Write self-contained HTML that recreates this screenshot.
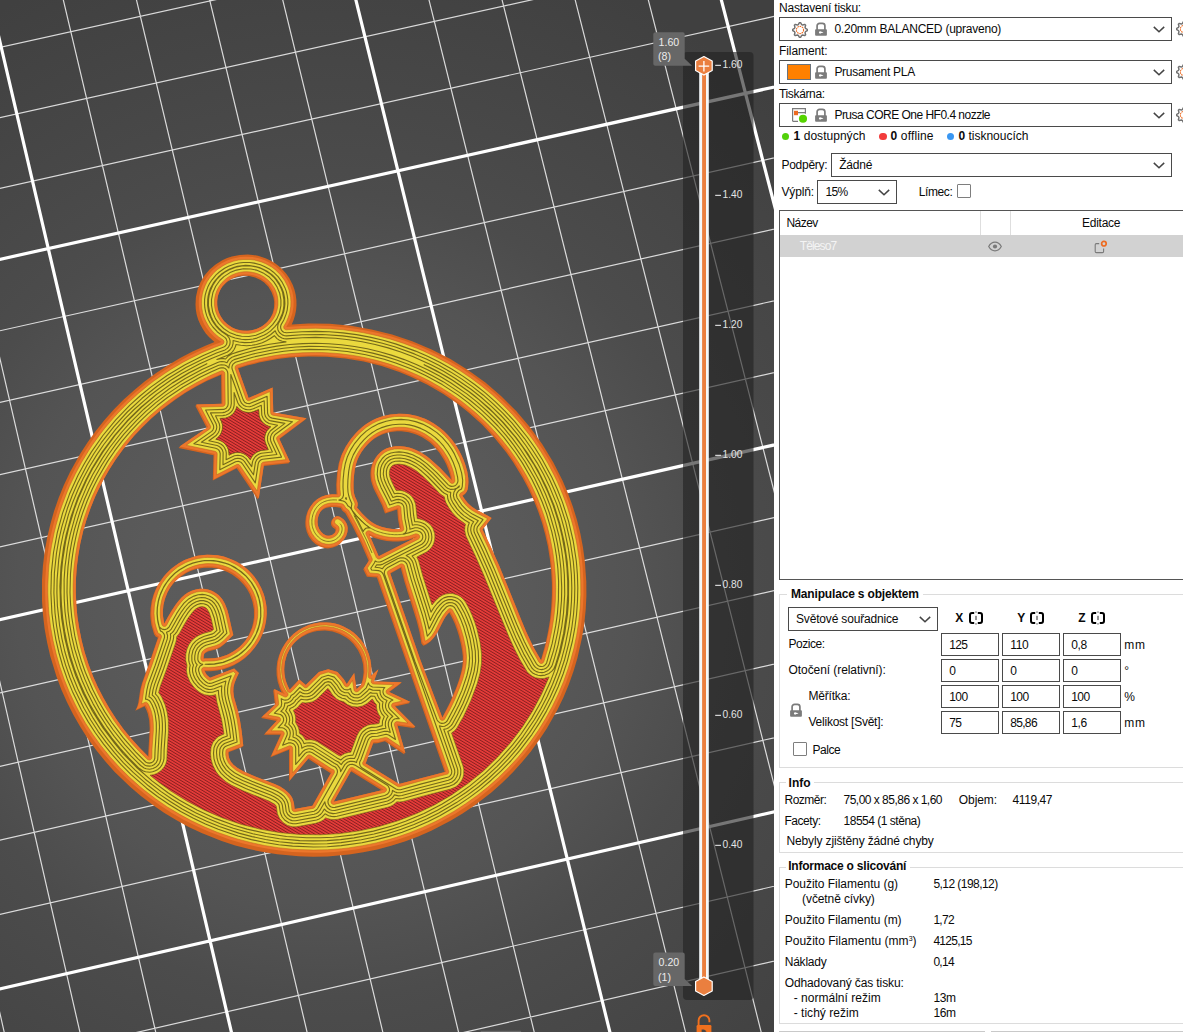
<!DOCTYPE html>
<html lang="cs"><head><meta charset="utf-8"><title>PrusaSlicer</title>
<style>
html,body{margin:0;padding:0;background:#fff;}
body{width:1183px;height:1032px;overflow:hidden;position:relative;font-family:"Liberation Sans",sans-serif;font-size:12px;color:#000;}
#vp{position:absolute;left:0;top:0;display:block}
#pn{position:absolute;left:774px;top:0;width:409px;height:1032px;background:#fff;overflow:hidden}
.t{position:absolute;white-space:nowrap;line-height:16px;font-size:12px;color:#0a0a0a}
.t.b,.t b{font-weight:bold}
.t.sel{color:#f4f4f4}
.sup{font-size:7px;position:relative;top:-4.5px}
.tk{font:10.2px "Liberation Sans",sans-serif;fill:#e4e4e4}
.tp{font:10.6px "Liberation Sans",sans-serif;fill:#ececec}
.combo{position:absolute;box-sizing:border-box;border:1px solid #4a4a4a;background:#fff}
.chev{position:absolute;right:6.5px;top:8.3px}
.ic{position:absolute}
.sw{position:absolute;box-sizing:border-box;width:24px;height:15.7px;background:#ff8000;border:1px solid #6a737c}
.dot{position:absolute;width:7.4px;height:7.4px;border-radius:50%}
.cb{position:absolute;box-sizing:border-box;width:14px;height:14px;border:1px solid #7e7e7e;background:#fff;border-radius:1px}
.list{position:absolute;box-sizing:border-box;border:1px solid #555;background:#fff}
.list .hsep{position:absolute;top:0;width:1px;height:24px;background:#dedede}
.list .row{position:absolute;left:0;right:0;top:24px;height:22px;background:#d2d2d2}
.grp{position:absolute;box-sizing:border-box;border:1px solid #dcdcdc}
.tb{position:absolute;height:8px;background:#fff}
.inp{position:absolute;box-sizing:border-box;width:58px;height:23px;border:1px solid #4a4a4a;background:#fff}
.btn{position:absolute;box-sizing:border-box;height:10px;border:1px solid #c9c9c9;background:#fff}
</style></head><body>
<svg id="vp" width="774" height="1032" viewBox="0 0 774 1032">
<defs>
<radialGradient id="bg" gradientUnits="userSpaceOnUse" cx="325" cy="595" r="670">
<stop offset="0" stop-color="#5e5e5e"/><stop offset=".28" stop-color="#5a5a5a"/><stop offset=".46" stop-color="#545454"/><stop offset=".6" stop-color="#4c4c4c"/><stop offset=".73" stop-color="#484848"/><stop offset="1" stop-color="#404040"/></radialGradient>
</defs>
<rect width="774" height="1032" fill="url(#bg)"/>
<path d="M-253.4 -106.3L59.6 1277.0M-183.9 -121.5L132.1 1260.3M-114.6 -136.7L204.6 1243.5M23.9 -167.0L349.1 1210.1M93.0 -182.2L421.3 1193.4M162.1 -197.3L493.4 1176.7M231.0 -212.4L565.4 1160.1M368.7 -242.6L709.1 1126.8M437.4 -257.7L780.8 1110.3M506.1 -272.7L852.4 1093.7M574.7 -287.7L924.0 1077.1M711.6 -317.7L1066.8 1044.1M779.9 -332.7L1138.1 1027.6M848.1 -347.7L1209.3 1011.1M-253.4 -106.3L916.3 -362.6M-223.3 26.5L951.3 -232.3M-208.2 93.3L968.9 -166.7M-193.0 160.4L986.5 -100.9M-177.8 227.8L1004.3 -34.7M-147.1 363.6L1040.0 98.5M-131.6 431.9L1058.0 165.6M-116.1 500.6L1076.1 233.0M-100.5 569.5L1094.3 300.6M-69.0 708.4L1130.8 436.9M-53.2 778.4L1149.2 505.5M-37.3 848.6L1167.7 574.5M-21.3 919.2L1186.3 643.7M10.8 1061.3L1223.7 783.1M27.0 1132.9L1242.5 853.3M43.3 1204.8L1261.5 923.8M59.6 1277.0L1280.5 994.7" stroke="#fff" stroke-opacity=".8" stroke-width="1.2" fill="none"/><path d="M-45.3 -151.9L276.9 1226.8M299.9 -227.5L637.3 1143.5M643.1 -302.7L995.5 1060.6M-238.4 -40.0L933.8 -297.6M-162.5 295.5L1022.1 31.8M-84.8 638.8L1112.5 368.6M-5.3 990.1L1205.0 713.2" stroke="#fff" stroke-width="3.2" fill="none"/>
<defs><pattern id="hatch" width="2.55" height="2.55" patternUnits="userSpaceOnUse" patternTransform="rotate(31)"><rect width="2.55" height="2.55" fill="#e93c3a"/><rect y="1.6" width="2.55" height="0.95" fill="#872020"/></pattern></defs><g id="obj"><path d="M205.4 345.7L192.6 351.5L180.1 358.1L168.0 365.2L156.2 372.9L144.9 381.3L134.1 390.2L123.7 399.6L113.8 409.6L104.5 420.1L95.7 431.0L87.5 442.4L79.9 454.2L69.8 472.6L63.8 485.2L58.6 498.1L54.0 511.3L50.2 524.7L47.0 538.3L44.6 552.1L42.9 565.9L42.0 579.9L42.0 600.9L43.0 614.9L44.6 628.8L47.1 642.5L50.2 656.1L56.4 676.3L61.3 689.5L67.0 702.3L73.3 714.8L80.4 727.0L88.0 738.9L96.3 750.3L105.2 761.3L114.7 771.9L130.1 786.7L140.9 796.0L152.2 804.6L164.0 812.7L176.1 820.1L188.7 826.9L201.6 833.0L221.6 841.0L235.3 845.4L249.1 849.1L263.2 852.1L277.3 854.3L298.8 856.3L313.1 856.7L327.5 856.4L349.1 854.5L363.3 852.3L377.3 849.4L391.1 845.8L404.8 841.5L418.2 836.4L431.3 830.7L450.5 820.8L462.6 813.5L474.5 805.5L491.4 792.4L502.0 783.0L512.2 773.0L521.7 762.6L530.7 751.7L539.0 740.3L546.8 728.5L557.3 710.0L563.4 697.4L568.8 684.4L573.5 671.3L577.5 657.8L582.1 637.3L584.3 623.6L585.7 609.7L586.4 595.7L586.3 581.8L584.8 560.8L582.9 547.0L580.3 533.3L576.9 519.8L572.8 506.5L568.0 493.4L562.5 480.5L553.1 461.9L542.1 444.1L529.8 427.1L516.2 411.1L501.3 396.3L485.4 382.6L468.3 370.2L450.4 359.1L431.6 349.4L412.2 341.2L392.1 334.5L371.6 329.4L350.7 325.8L329.6 323.8L308.4 323.5L291.7 324.4L293.6 320.0L295.1 315.1L296.1 310.0L296.5 304.9L296.4 299.9L295.7 294.8L294.5 289.8L292.8 285.0L289.2 277.9L286.2 273.7L282.7 269.8L278.9 266.3L274.7 263.1L270.3 260.4L265.5 258.2L258.0 255.8L252.8 254.9L247.7 254.5L239.7 254.9L231.9 256.4L227.1 258.1L222.3 260.3L215.6 264.4L209.6 269.6L204.5 275.6L200.5 282.2L197.6 289.4L195.9 297.0L195.5 304.5L195.8 309.6L196.7 314.7L198.2 319.7L200.3 324.6L202.8 329.1L205.8 333.4L209.2 337.3L214.5 342.0ZM195.8 405.1L196.1 405.8L195.3 405.8L206.8 427.9L179.6 446.6L179.9 446.7L178.6 447.9L213.5 455.2L212.8 480.6L236.7 468.3L257.8 499.5L258.0 498.4L258.3 498.8L258.5 497.7L258.8 498.2L263.7 466.0L289.0 463.2L288.7 462.6L289.5 462.5L289.2 462.0L290.0 461.9L279.4 439.0L305.5 419.6L305.2 419.5L306.5 418.3L273.3 412.5L272.6 387.5L248.6 398.0L238.0 368.5L247.1 365.6L259.1 362.6L277.4 359.1L289.7 357.6L308.3 356.5L326.9 356.8L345.4 358.5L363.7 361.6L381.7 366.1L399.3 372.0L410.8 376.7L427.4 384.7L443.4 394.1L458.6 404.6L468.3 412.2L482.0 424.6L494.6 437.9L506.2 452.2L513.2 462.2L522.8 477.9L528.5 488.7L533.6 499.9L538.1 511.2L542.0 522.8L545.2 534.6L547.9 546.5L549.8 558.6L551.2 570.7L551.9 582.9L551.9 595.1L551.3 607.3L550.1 619.5L548.1 631.6L545.6 643.6L540.9 660.2L533.0 646.2L526.2 631.8L499.1 565.6L490.5 546.2L482.5 529.5L491.6 518.0L487.4 515.5L476.3 509.7L472.2 507.1L467.7 503.1L463.4 497.2L462.6 495.9L465.0 493.9L466.5 491.9L467.5 489.8L468.1 486.7L468.4 482.1L468.2 477.7L467.3 471.7L465.6 465.8L463.6 460.1L461.2 454.7L458.5 449.4L455.3 444.3L451.8 439.5L447.8 435.0L443.5 430.7L438.8 426.9L433.8 423.5L425.0 418.8L417.1 416.0L407.3 414.1L398.8 413.7L388.8 414.8L380.6 416.9L375.1 419.0L371.4 420.9L364.4 425.4L358.0 430.9L351.3 438.5L345.7 446.5L341.2 455.4L338.7 463.5L337.1 473.1L336.2 484.7L336.6 494.4L331.0 494.4L325.6 495.3L320.7 497.1L316.8 499.5L313.2 502.7L309.7 507.5L307.5 511.6L305.9 516.7L305.3 522.2L305.5 526.8L306.8 532.0L308.7 536.3L311.9 540.8L315.4 544.0L319.7 546.6L324.1 548.0L327.9 548.4L332.0 547.8L336.3 546.2L339.8 543.9L343.1 540.5L346.1 535.9L347.4 532.1L347.7 528.1L347.2 525.3L346.4 523.2L345.2 521.2L343.7 519.5L339.8 516.8L337.6 516.3L336.0 516.5L334.5 517.2L333.3 518.3L331.6 520.5L330.9 522.5L331.1 524.7L331.8 526.2L332.9 527.4L335.0 528.9L335.4 529.6L335.3 531.4L334.5 533.1L332.3 534.9L329.2 535.8L326.3 535.5L323.8 534.2L321.3 532.1L319.4 529.4L318.2 526.5L317.5 523.3L317.6 519.2L318.4 515.9L320.1 512.2L322.0 510.1L325.6 508.0L330.3 506.9L335.5 506.9L340.6 507.8L342.4 510.7L343.5 511.8L345.2 512.9L352.2 525.5L361.1 543.4L368.7 560.9L363.2 569.2L366.9 576.7L376.9 577.6L444.8 772.1L420.0 778.4L399.0 784.1L365.4 763.3L365.8 763.0L373.0 743.4L377.4 743.2L384.9 741.3L404.4 754.4L404.0 753.2L404.9 753.8L404.5 752.5L405.4 753.1L397.4 725.7L414.6 728.3L413.7 727.4L415.1 727.6L414.2 726.8L415.6 727.0L395.1 706.5L409.4 703.2L408.6 702.8L409.9 702.5L409.1 702.2L410.4 701.9L389.2 691.9L400.7 683.6L400.3 683.6L401.7 682.3L373.8 681.4L378.4 669.3L370.9 676.1L371.4 671.0L371.1 664.5L370.4 659.9L368.7 653.7L366.9 649.4L363.7 643.7L361.0 640.0L356.6 635.2L353.2 632.3L349.6 629.7L343.5 626.5L339.4 624.8L335.1 623.6L330.7 622.8L326.3 622.4L319.6 622.6L313.1 623.8L308.7 625.1L302.7 627.7L298.7 630.0L293.4 634.1L288.8 638.7L285.0 643.6L281.6 649.2L279.0 655.4L277.2 661.8L276.5 668.5L276.6 675.1L277.7 681.7L279.7 688.1L281.9 692.7L274.2 688.9L274.3 689.9L273.7 689.5L273.8 690.5L273.2 690.2L275.0 704.8L262.1 716.8L261.1 718.1L276.7 720.9L263.9 734.8L280.6 734.8L270.4 757.2L289.0 749.7L289.0 781.4L308.2 758.8L330.2 773.1L330.8 773.0L312.3 805.7L294.6 809.1L294.0 803.5L292.3 798.1L289.4 793.7L284.6 789.4L280.1 786.6L275.2 784.3L255.2 776.4L243.7 771.5L237.6 768.0L233.4 764.7L230.9 761.7L229.7 759.5L228.5 755.7L228.4 752.3L242.3 747.1L242.3 746.7L243.3 745.8L241.6 730.8L239.9 720.1L237.8 710.6L234.2 697.9L233.3 691.5L233.5 687.2L234.5 683.0L236.5 677.9L238.9 673.1L234.2 668.4L210.0 677.7L206.9 675.0L204.7 671.3L210.8 671.3L217.4 670.6L223.6 669.2L229.9 667.1L233.3 665.6L239.1 662.3L244.5 658.4L249.4 653.9L253.6 649.1L256.7 644.8L260.2 639.1L262.9 633.0L264.8 627.0L266.1 620.4L266.7 613.8L266.5 607.1L266.0 603.5L264.7 597.3L263.6 593.7L261.2 587.9L257.9 581.7L254.2 576.5L251.8 573.7L247.3 569.3L244.5 566.9L239.3 563.3L236.1 561.5L227.2 557.7L223.7 556.6L217.5 555.3L213.9 554.9L207.5 554.7L203.9 554.9L197.6 555.8L194.0 556.7L188.0 558.7L184.6 560.1L178.8 563.3L173.5 566.9L170.7 569.2L166.2 573.7L163.8 576.5L160.8 580.5L157.5 585.8L155.8 589.1L153.4 595.0L151.6 601.4L150.6 608.0L150.3 614.7L150.5 618.3L151.4 624.9L154.1 634.2L155.6 636.6L157.9 637.8L148.8 664.6L141.9 683.6L140.2 690.0L138.2 703.2L137.1 707.1L135.3 710.8L144.6 706.2L146.4 709.9L147.8 713.7L149.2 720.3L149.7 728.4L148.1 756.4L139.8 748.0L131.4 738.8L123.6 729.2L116.4 719.2L109.6 708.8L103.5 698.1L97.9 687.2L92.9 675.9L88.6 664.4L84.8 652.7L81.7 640.8L79.3 628.8L77.4 616.7L76.3 604.5L75.8 592.3L75.9 580.0L76.7 567.8L78.2 555.7L80.3 543.6L83.0 531.7L86.4 520.0L90.4 508.4L95.0 497.0L103.0 480.5L109.0 469.9L115.7 459.5L125.6 446.0L133.5 436.6L141.9 427.7L150.8 419.1L160.1 411.1L174.9 399.9L185.1 393.1L195.8 386.8L206.7 381.1L221.1 374.7L221.5 403.8L196.3 404.5L196.6 405.1ZM434.8 636.3L437.5 631.9L444.5 618.5L446.5 615.4L449.2 612.6L451.9 617.4L454.7 623.6L457.1 629.9L459.1 636.4L461.0 644.4L462.2 651.1L462.8 656.5L462.8 662.0L462.2 667.4L461.1 672.7L459.2 679.3L456.5 687.1L450.2 702.1L442.3 717.4L420.4 659.9L390.3 573.5L400.7 567.8L404.7 582.6L416.7 620.9L419.5 632.0L421.4 643.4L423.3 645.7L426.3 644.4L430.4 641.5ZM399.8 529.0L391.8 528.9L386.2 528.1L380.7 526.6L376.1 524.7L372.5 522.7L369.2 520.3L361.2 512.5L357.0 507.4L357.6 505.7L357.7 503.3L357.0 501.0L354.9 496.6L353.9 492.7L353.5 488.4L353.5 482.1L354.6 470.5L355.5 465.9L356.7 461.6L358.5 457.5L361.5 452.1L364.2 448.3L367.3 444.8L370.7 441.6L374.2 438.8L378.0 436.5L382.0 434.6L386.3 433.1L390.7 432.0L396.8 431.3L401.3 431.2L408.8 432.2L413.2 433.4L417.5 435.0L421.7 437.0L425.6 439.4L429.4 442.1L432.9 445.2L439.1 452.2L444.2 460.2L446.3 464.5L448.7 470.5L450.1 475.0L451.0 479.3L439.6 467.5L429.5 458.4L421.4 452.8L413.7 449.0L408.9 447.5L404.1 446.6L399.1 446.2L394.1 446.5L389.2 447.5L385.7 448.8L382.5 450.6L379.6 453.0L377.1 455.8L374.7 459.1L372.9 462.4L371.6 466.0L370.8 469.6L370.5 473.4L370.6 477.1L371.1 480.7L372.1 484.3L373.8 488.9L382.1 505.6L385.0 513.6L397.2 509.4L398.0 519.3ZM378.7 556.3L369.8 535.9L374.7 538.0L380.6 539.8L386.7 541.0L392.8 541.6L398.3 541.5L403.7 540.9L409.0 539.8L415.2 537.8ZM350.9 771.3L381.6 790.3L333.6 801.8ZM284.2 669.5L284.9 661.9L287.0 654.6L290.5 647.8L292.9 644.5L295.5 641.7L301.5 637.0L308.3 633.5L313.7 631.7L317.4 630.9L325.1 630.5L332.6 631.6L339.8 634.0L346.5 637.8L349.5 640.1L353.5 644.1L358.0 650.3L361.3 657.2L363.1 664.6L363.6 672.2L362.6 679.7L360.9 685.2L356.5 689.2L354.2 673.0L346.7 684.1L344.0 679.6L337.5 672.1L328.2 669.3L318.9 672.1L305.8 685.1L299.3 679.6L289.7 689.8L287.8 686.1L285.8 680.8L284.6 675.2ZM267.2 322.1L262.5 325.9L257.2 328.7L251.3 330.4L246.8 330.8L242.2 330.6L236.3 329.2L232.1 327.4L227.1 324.0L223.9 320.9L220.5 316.0L218.7 311.9L217.3 306.2L217.1 301.7L217.9 295.9L220.0 290.3L222.4 286.5L226.4 282.4L231.5 279.1L237.1 276.8L243.1 275.8L249.2 276.0L255.1 277.4L260.6 279.9L264.2 282.5L268.4 286.8L271.5 291.9L273.5 297.4L274.2 301.8L274.0 307.7L272.6 313.4L269.9 318.8ZM164.6 600.1L167.4 592.6L169.9 587.9L172.2 584.7L175.6 580.9L179.6 577.4L186.3 573.0L191.1 570.8L196.2 569.1L204.0 567.8L212.0 567.8L217.3 568.6L222.5 569.9L227.4 571.9L232.1 574.4L238.5 579.2L244.0 585.0L247.1 589.3L249.7 594.0L252.4 601.5L253.9 609.3L254.0 617.3L253.2 622.6L251.9 627.8L248.8 635.1L245.0 641.2L240.1 646.4L233.7 651.3L226.7 655.0L219.0 657.4L213.8 658.2L205.0 658.4L203.5 658.7L203.8 655.1L204.2 653.9L204.8 653.2L207.9 651.6L216.5 649.2L220.5 647.2L225.0 643.5L233.3 634.9L227.8 611.3L225.4 604.9L222.9 600.1L219.5 596.0L216.4 593.4L212.9 591.3L209.1 589.8L205.1 588.9L201.0 588.7L197.0 589.2L191.7 590.8L188.0 592.6L184.7 594.8L181.6 597.5L178.9 600.4L175.4 604.9L171.6 610.5L164.2 623.4L163.0 616.0L162.9 610.6L163.4 605.3Z" fill="#d5641f" fill-rule="evenodd"/><path d="M290.1 285.2L288.0 280.8L284.0 274.8L280.8 271.1L275.3 266.3L271.2 263.5L264.6 260.2L259.9 258.6L252.7 257.1L245.3 256.7L240.3 257.0L233.0 258.5L228.3 260.1L221.7 263.3L217.6 266.0L212.0 270.8L208.8 274.5L205.9 278.4L203.5 282.6L201.6 287.1L200.2 291.7L199.2 296.4L198.8 301.2L198.9 306.0L199.5 310.8L200.6 315.5L202.2 320.0L204.3 324.4L206.9 328.5L209.9 332.4L213.3 335.9L217.0 339.0L221.4 341.9L213.3 345.0L200.5 350.5L187.9 356.6L181.8 359.9L169.8 366.9L163.9 370.7L152.5 378.7L147.0 382.9L136.2 391.7L131.1 396.3L121.0 405.9L116.2 410.9L107.0 421.2L102.6 426.6L94.2 437.6L90.3 443.3L82.8 454.9L75.9 466.9L69.7 479.3L66.9 485.5L61.7 498.3L59.3 504.8L55.2 518.0L53.4 524.6L50.2 538.1L49.0 544.9L47.0 558.5L46.2 565.4L45.3 579.1L45.1 586.0L45.3 599.9L45.7 606.8L47.0 620.5L49.0 634.2L51.8 647.8L55.3 661.2L59.5 674.4L64.4 687.3L70.0 700.1L73.1 706.3L79.7 718.6L86.9 730.5L94.8 742.0L103.3 753.1L112.4 763.7L122.1 773.9L132.3 783.5L137.6 788.1L148.5 797.0L160.0 805.2L171.8 812.9L184.0 819.9L196.7 826.3L209.6 832.1L222.8 837.1L229.5 839.4L243.1 843.4L256.9 846.7L270.9 849.3L285.0 851.2L292.1 851.9L306.3 852.6L320.5 852.7L334.7 852.0L341.8 851.3L355.9 849.6L369.8 847.0L383.7 843.8L397.3 839.8L410.7 835.2L423.8 829.9L436.6 823.9L442.9 820.6L455.2 813.7L467.1 806.1L478.6 797.9L489.6 789.1L500.1 779.8L510.1 770.0L519.5 759.6L524.1 754.3L532.6 743.3L540.6 731.8L548.0 720.0L554.7 707.8L560.7 695.2L566.1 682.4L570.7 669.4L572.8 662.8L576.4 649.4L579.3 635.9L581.4 622.2L582.8 608.5L583.5 594.7L583.4 580.9L582.6 567.1L582.0 560.3L580.1 546.6L578.9 539.9L575.9 526.4L574.1 519.8L570.1 506.6L565.3 493.6L559.9 481.0L557.0 474.7L550.5 462.5L543.5 450.7L535.8 439.2L531.8 433.6L523.2 422.7L514.1 412.3L504.4 402.4L494.3 393.0L483.6 384.1L472.5 375.8L461.0 368.0L449.0 360.9L436.7 354.4L424.1 348.5L417.7 345.8L404.7 340.8L391.4 336.6L377.9 333.0L364.2 330.2L357.3 329.0L343.5 327.2L329.6 326.0L315.6 325.6L301.6 325.9L286.3 327.1L288.9 322.6L290.8 318.1L292.3 313.5L293.5 306.4L293.6 301.6L293.3 296.8L292.4 292.0ZM196.3 404.5L208.0 427.0L179.6 446.6L214.5 453.9L213.8 479.3L237.7 467.0L258.8 498.2L263.9 464.8L290.0 461.9L279.2 438.6L306.5 418.3L273.3 412.5L272.6 387.5L248.6 398.0L237.7 367.6L248.1 364.3L260.1 361.3L266.2 360.0L278.4 357.8L290.7 356.3L296.9 355.8L309.3 355.2L315.5 355.1L327.9 355.5L340.2 356.5L346.4 357.2L358.6 359.1L364.7 360.3L376.7 363.2L382.7 364.8L394.5 368.6L400.3 370.7L411.8 375.4L422.9 380.6L428.4 383.4L439.2 389.5L444.4 392.8L454.6 399.6L459.6 403.3L469.3 410.9L478.5 419.0L483.0 423.3L491.5 432.1L495.6 436.6L503.5 446.1L507.2 450.9L514.2 460.9L520.8 471.3L523.8 476.6L529.5 487.4L534.6 498.6L539.1 509.9L543.0 521.5L546.2 533.3L548.9 545.2L550.8 557.3L552.2 569.4L552.6 575.5L553.0 587.7L552.7 599.9L551.8 612.1L550.2 624.3L547.9 636.3L545.1 648.2L541.3 660.8L534.2 648.5L530.7 641.4L526.2 631.8L521.0 619.6L507.2 585.2L499.1 565.6L490.5 546.2L482.5 529.5L491.6 518.0L487.4 515.5L476.3 509.7L472.2 507.1L469.4 504.8L467.7 503.1L465.4 500.3L463.4 497.2L462.2 495.2L463.6 494.6L464.9 493.7L466.0 492.6L466.9 491.2L467.5 489.8L468.0 487.2L468.4 482.1L468.2 477.7L467.3 471.7L465.6 465.8L463.6 460.1L461.2 454.7L458.5 449.4L455.3 444.3L451.8 439.5L447.8 435.0L443.5 430.7L438.8 426.9L433.8 423.5L428.7 420.6L425.0 418.8L417.1 416.0L411.3 414.7L407.3 414.1L399.0 413.7L390.6 414.5L384.8 415.7L380.9 416.8L376.7 418.3L373.0 420.1L369.3 422.1L365.8 424.3L362.5 426.8L358.1 430.7L355.2 433.8L351.4 438.3L348.9 441.7L345.8 446.7L342.2 454.1L340.9 458.0L339.7 462.2L338.0 471.9L337.5 477.6L337.2 485.2L337.3 489.4L337.8 494.5L332.1 494.3L326.7 495.1L321.7 496.7L317.5 498.9L314.0 501.9L310.7 506.2L308.5 510.3L306.9 515.4L306.3 520.9L306.5 525.5L307.8 530.7L309.7 535.0L312.9 539.5L316.4 542.7L320.7 545.3L325.1 546.7L328.9 547.1L333.0 546.5L337.3 544.9L340.8 542.6L344.1 539.2L346.1 535.9L347.4 532.1L347.7 528.1L347.2 525.3L346.4 523.2L345.2 521.2L343.7 519.5L341.7 517.9L339.8 516.8L337.6 516.3L336.0 516.5L334.5 517.2L333.3 518.3L332.2 520.2L331.9 521.8L332.1 523.4L332.8 524.9L333.9 526.1L336.0 527.6L336.4 528.3L336.3 530.1L335.2 532.4L334.1 533.6L332.8 534.6L331.2 535.3L329.2 535.8L327.7 535.8L326.3 535.5L323.3 533.9L320.9 531.6L319.1 528.8L318.0 525.8L317.5 521.9L317.9 517.9L318.9 514.6L320.5 511.6L323.0 508.8L324.4 507.8L326.6 506.7L331.3 505.6L336.5 505.6L341.6 506.5L343.4 509.4L344.5 510.5L346.2 511.6L353.2 524.2L362.1 542.1L369.7 559.6L364.2 567.9L367.9 575.4L377.9 576.3L446.1 771.8L420.0 778.4L399.0 784.1L365.3 763.3L365.8 763.0L373.5 742.1L378.4 741.9L385.9 740.0L405.4 753.1L397.0 724.2L415.6 727.0L394.2 705.6L410.4 701.9L388.7 691.7L401.7 682.3L373.8 681.4L378.4 669.3L370.9 676.1L371.4 671.0L371.1 664.5L370.4 659.9L368.7 653.7L366.9 649.4L363.7 643.7L361.0 640.0L356.6 635.2L353.2 632.3L349.6 629.7L343.5 626.5L339.4 624.8L335.1 623.6L330.7 622.8L326.3 622.4L319.6 622.6L313.1 623.8L308.7 625.1L302.7 627.7L298.7 630.0L293.4 634.1L288.8 638.7L286.0 642.3L282.5 648.1L280.7 652.1L279.3 656.2L277.9 662.7L277.4 669.4L277.9 676.2L278.7 680.4L280.0 684.7L281.6 688.9L283.7 692.8L284.5 693.8L285.4 694.4L274.2 688.9L276.0 703.8L262.1 716.8L277.9 719.6L264.9 733.5L281.6 733.5L271.4 755.9L290.0 748.4L290.0 780.1L309.2 757.5L331.2 771.8L331.8 771.7L312.6 805.7L294.6 809.1L294.0 803.5L293.3 800.7L292.3 798.1L291.0 795.8L289.4 793.7L287.6 791.9L284.6 789.4L280.1 786.6L275.2 784.3L255.2 776.4L243.7 771.5L237.6 768.0L233.4 764.7L230.9 761.7L229.2 758.3L228.4 754.3L228.4 751.4L243.3 745.8L241.6 730.8L239.9 720.1L237.8 710.6L234.2 697.9L233.6 694.7L233.3 691.5L233.5 687.2L234.5 683.0L236.5 677.9L238.9 673.1L234.2 668.4L210.0 677.7L208.0 676.1L206.4 674.4L205.0 672.0L204.3 669.9L208.5 670.1L215.1 669.8L221.7 668.7L228.1 666.8L234.0 664.4L239.8 661.2L245.3 657.3L250.2 652.8L254.6 647.8L258.4 642.3L260.2 639.1L262.9 633.0L264.8 627.0L266.1 620.4L266.7 613.8L266.5 607.1L266.0 603.5L264.7 597.3L263.6 593.7L261.2 587.9L257.9 581.7L254.2 576.5L251.8 573.7L247.3 569.3L244.5 566.9L239.3 563.3L236.1 561.5L233.1 560.0L227.2 557.7L223.7 556.6L217.5 555.3L213.9 554.9L207.5 554.7L203.9 554.9L197.6 555.8L194.0 556.7L188.0 558.7L184.6 560.1L178.8 563.3L173.5 566.9L170.7 569.2L166.2 573.7L163.8 576.5L160.2 581.7L158.3 584.8L155.6 590.5L154.3 594.0L152.6 600.1L151.6 606.7L151.3 613.4L151.8 620.0L153.1 626.9L155.3 633.4L156.6 635.3L158.9 636.5L156.1 644.3L149.8 663.3L142.9 682.3L141.2 688.7L139.2 701.9L138.1 705.8L136.3 709.5L145.6 704.9L147.4 708.6L149.2 713.7L150.4 720.3L150.7 727.1L150.5 734.0L149.3 750.5L149.2 757.4L139.8 748.0L131.4 738.8L123.6 729.2L116.4 719.2L109.6 708.8L103.5 698.1L97.9 687.2L92.9 675.9L88.6 664.4L84.8 652.7L81.7 640.8L79.3 628.8L77.4 616.7L76.3 604.5L75.8 592.3L75.9 580.0L76.7 567.8L78.2 555.7L80.3 543.6L83.0 531.7L86.4 520.0L90.4 508.4L95.0 497.0L97.5 491.5L103.0 480.5L109.0 469.9L115.7 459.5L122.8 449.6L126.6 444.7L134.5 435.3L142.9 426.4L151.8 417.8L161.1 409.8L165.9 405.9L175.9 398.6L186.1 391.8L196.8 385.5L207.7 379.8L222.1 373.4L222.5 403.8ZM405.7 581.3L414.5 608.6L417.7 619.6L420.5 630.7L422.4 642.1L424.3 644.4L427.3 643.1L429.9 641.5L432.1 639.5L434.1 637.2L437.5 631.9L442.9 621.3L445.0 617.6L447.4 614.2L450.2 611.3L452.9 616.1L455.7 622.3L458.1 628.6L460.1 635.1L462.6 645.8L463.8 655.2L463.7 662.0L462.4 670.1L459.4 680.6L454.5 693.4L448.9 705.7L442.4 717.7L420.4 659.9L390.1 572.9L401.7 566.5ZM398.0 529.1L393.0 529.0L387.4 528.3L381.9 527.0L377.2 525.2L373.5 523.3L370.1 521.0L366.8 518.2L362.1 513.4L357.0 507.4L357.6 505.7L357.7 503.3L357.0 501.0L354.9 496.6L353.9 492.7L353.5 488.4L353.5 482.1L354.0 475.3L354.8 468.9L355.9 464.4L357.3 460.2L359.1 456.1L361.5 452.1L364.2 448.3L368.3 443.5L371.7 440.3L375.2 437.5L379.0 435.2L383.0 433.3L387.3 431.8L391.7 430.7L397.8 430.0L402.3 429.9L406.8 430.3L411.3 431.2L415.7 432.5L419.9 434.3L424.0 436.4L427.9 439.0L431.6 441.8L435.0 445.0L438.2 448.5L441.0 452.2L443.6 456.2L446.6 461.7L448.5 466.1L450.7 472.2L451.7 476.6L452.2 480.7L440.5 468.3L430.5 459.2L426.6 456.1L422.5 453.4L418.2 451.0L414.8 449.5L410.1 447.8L405.3 446.7L400.3 446.2L395.3 446.3L390.4 447.2L386.8 448.3L383.5 450.0L380.5 452.2L377.9 454.8L375.7 457.8L373.9 461.1L372.6 464.7L371.8 468.3L371.5 472.1L371.6 475.8L372.4 480.6L373.4 484.1L374.8 487.6L383.1 504.3L384.9 508.8L386.0 512.3L398.2 508.1L398.5 513.5L399.1 518.8L401.1 528.8ZM368.5 533.4L375.7 536.7L381.6 538.5L387.6 539.7L393.1 540.2L398.5 540.3L403.9 539.8L410.0 538.5L415.9 536.4L417.1 536.8L378.7 556.3L370.9 538.2ZM383.8 789.8L333.6 801.8L351.6 770.0ZM284.4 673.3L284.2 669.5L284.4 665.7L284.9 661.9L285.8 658.2L287.0 654.6L288.6 651.1L290.5 647.8L293.9 643.2L296.5 640.4L299.4 637.9L302.5 635.7L305.8 633.8L309.3 632.2L312.9 630.9L316.6 630.0L320.3 629.4L324.1 629.2L328.0 629.4L331.7 629.9L335.5 630.7L340.8 632.7L344.2 634.4L347.5 636.5L350.5 638.8L353.3 641.4L355.8 644.3L358.0 647.4L360.0 650.6L361.6 654.1L362.9 657.7L363.8 661.4L364.4 665.2L364.6 669.0L364.5 672.8L363.6 678.4L362.5 682.1L361.6 684.5L356.5 689.2L354.2 673.0L346.8 684.2L344.0 679.6L337.5 672.1L328.2 669.3L318.9 672.1L305.8 685.1L299.3 679.6L289.7 689.8L287.8 686.1L286.4 682.6L285.3 678.9ZM275.2 300.5L275.3 303.5L275.0 306.4L274.5 309.3L273.6 312.1L272.4 314.9L270.9 317.5L268.2 321.0L266.1 323.2L263.8 325.1L261.3 326.7L258.6 328.1L255.8 329.3L252.8 330.1L248.3 330.8L243.7 330.8L240.7 330.4L237.7 329.7L234.9 328.7L232.1 327.4L229.5 325.8L227.1 324.0L223.9 320.9L222.1 318.5L220.5 316.0L219.2 313.3L218.2 310.5L217.5 307.6L217.2 304.7L217.2 300.3L217.6 297.3L218.3 294.5L219.4 291.7L220.7 289.0L222.3 286.5L224.2 284.2L227.4 281.1L229.9 279.3L232.5 277.8L235.2 276.5L238.1 275.5L241.1 274.8L244.1 274.5L247.1 274.4L250.2 274.7L253.2 275.2L256.1 276.1L258.9 277.2L261.6 278.6L265.2 281.2L267.4 283.3L269.4 285.5L271.1 288.0L272.5 290.6L273.7 293.3L274.5 296.1ZM163.4 605.3L164.6 600.1L165.4 597.6L167.4 592.6L169.9 587.9L173.0 583.6L176.6 579.6L180.6 576.1L182.7 574.5L184.9 573.1L189.6 570.6L194.6 568.6L199.8 567.2L205.0 566.5L207.7 566.3L213.0 566.5L215.7 566.8L220.9 567.9L223.5 568.6L228.4 570.6L233.1 573.1L235.3 574.6L239.5 577.9L243.3 581.6L246.6 585.8L248.1 588.0L250.7 592.7L252.7 597.6L253.4 600.2L254.6 605.4L254.9 608.0L255.1 613.4L254.7 618.7L253.6 623.9L252.9 626.5L251.0 631.4L248.5 636.2L245.5 640.6L243.8 642.6L242.0 644.6L238.1 648.2L233.7 651.3L229.1 653.9L226.7 655.0L221.6 656.7L219.0 657.4L213.8 658.2L208.4 658.5L205.0 658.4L203.5 658.7L203.6 656.6L204.0 654.5L204.5 653.3L205.8 651.9L208.2 650.6L216.7 648.2L220.9 646.2L225.0 643.2L233.3 634.9L231.7 628.8L228.8 615.4L227.3 610.0L224.8 603.6L222.1 599.1L218.6 595.1L215.3 592.7L211.7 590.7L207.8 589.4L203.8 588.7L199.7 588.8L195.6 589.5L191.7 590.8L188.0 592.6L184.7 594.8L181.6 597.5L178.9 600.4L175.6 604.7L171.9 610.4L167.8 617.3L164.3 623.8L163.8 621.2L163.0 616.0L162.9 610.6Z" fill="#ec772c" fill-rule="evenodd"/><path d="M287.6 286.2L284.5 280.2L280.4 274.7L275.5 269.9L271.8 267.1L265.7 263.7L261.4 261.9L254.6 260.1L250.0 259.5L243.0 259.5L238.3 260.1L233.8 261.1L227.2 263.5L223.1 265.7L217.4 269.6L213.9 272.7L209.5 278.0L207.0 281.8L205.0 285.9L203.4 290.2L202.3 294.6L201.6 299.0L201.5 303.6L201.8 308.1L202.6 312.5L203.9 316.9L205.7 321.1L209.1 327.0L211.9 330.6L215.1 333.9L218.7 336.9L223.3 340.1L224.0 341.5L223.8 343.1L223.2 343.9L222.5 344.4L214.3 347.5L201.6 352.9L189.2 359.0L183.1 362.2L171.2 369.2L165.4 373.0L154.1 380.8L148.6 385.0L138.0 393.7L127.9 403.0L118.2 412.7L113.6 417.8L104.7 428.3L100.5 433.7L92.5 444.8L88.7 450.5L81.6 462.2L75.2 474.3L69.3 486.6L66.7 492.9L61.9 505.7L59.7 512.2L56.0 525.3L54.3 532.0L51.6 545.3L50.5 552.1L48.9 565.6L48.4 572.4L47.8 586.1L47.8 592.9L48.4 606.6L48.9 613.4L50.6 627.0L53.0 640.4L56.1 653.8L59.9 667.0L64.4 679.9L69.6 692.7L75.5 705.1L78.7 711.2L85.5 723.2L93.0 734.7L101.2 745.9L109.9 756.7L119.2 767.0L129.0 776.8L139.3 786.1L144.7 790.5L155.8 799.0L167.3 806.9L179.2 814.1L191.5 820.8L204.2 826.8L217.1 832.2L230.4 836.8L237.1 838.9L250.7 842.5L264.4 845.5L278.3 847.7L292.3 849.2L299.3 849.6L313.4 850.0L327.5 849.7L341.5 848.7L348.5 847.9L362.4 845.7L376.2 842.9L389.8 839.3L396.5 837.3L409.7 832.7L422.7 827.4L435.4 821.5L441.6 818.3L453.8 811.4L465.6 803.8L476.9 795.7L487.8 787.1L498.3 777.8L508.1 768.1L517.5 757.9L522.0 752.6L530.5 741.6L538.4 730.3L545.6 718.6L552.3 706.5L558.3 694.1L563.6 681.5L568.2 668.5L570.2 662.0L573.8 648.8L576.6 635.4L578.7 621.9L580.1 608.3L580.8 594.6L580.7 581.0L580.0 567.4L579.3 560.6L577.4 547.1L576.2 540.4L573.3 527.1L571.5 520.5L567.5 507.4L562.8 494.6L557.5 482.1L554.5 475.9L548.2 463.8L541.2 452.1L533.6 440.7L529.6 435.2L521.1 424.4L512.1 414.2L502.5 404.3L492.5 395.0L481.9 386.2L470.9 378.0L459.5 370.3L447.7 363.2L435.5 356.8L423.1 350.9L416.7 348.3L403.8 343.4L390.6 339.2L377.3 335.7L363.7 332.8L356.9 331.7L343.2 329.8L329.4 328.7L315.6 328.3L301.8 328.6L286.4 329.8L285.1 329.5L284.4 329.0L283.8 328.1L283.7 326.6L286.5 321.4L288.3 317.2L289.7 312.9L290.8 306.2L290.9 301.6L290.6 297.1L289.2 290.5ZM141.5 703.9L145.4 702.2L146.7 702.4L147.7 703.2L149.4 706.3L151.0 710.3L152.1 714.4L152.9 718.6L153.3 724.2L153.4 729.9L152.0 749.3L151.9 757.6L151.7 758.3L151.2 759.2L150.3 759.8L149.6 760.1L148.0 759.8L146.7 758.8L142.2 754.4L133.5 745.3L129.4 740.6L121.5 730.9L114.1 720.7L107.3 710.2L104.1 704.9L98.2 693.9L92.8 682.6L90.4 676.9L86.0 665.3L82.2 653.5L79.1 641.4L76.6 629.2L75.6 623.1L74.1 610.9L73.2 598.5L73.1 586.1L73.5 573.7L74.0 567.5L75.5 555.3L77.6 543.1L80.4 531.1L83.8 519.2L87.8 507.5L92.5 496.0L97.7 484.8L103.6 473.8L110.0 463.2L117.0 452.9L124.5 443.0L132.5 433.5L141.0 424.4L150.0 415.8L159.4 407.7L169.3 400.0L174.3 396.4L184.7 389.5L195.5 383.2L206.5 377.4L212.2 374.7L221.5 370.7L223.1 370.9L224.3 371.9L224.8 373.4L225.2 403.8L224.9 405.0L224.0 406.0L222.8 406.5L200.7 407.1L210.4 425.8L210.7 426.7L210.5 428.0L209.5 429.2L186.3 445.2L215.1 451.3L216.4 452.0L217.0 452.9L217.2 454.0L216.6 474.8L236.7 464.5L238.0 464.3L239.2 464.8L239.9 465.5L257.2 491.0L261.2 464.4L261.9 462.9L262.6 462.4L263.6 462.1L286.0 459.6L276.7 439.5L276.5 438.2L276.9 437.2L277.6 436.4L299.9 419.9L272.8 415.2L271.4 414.5L270.8 413.6L270.6 412.6L270.0 391.6L249.4 400.6L248.2 400.7L247.0 400.2L246.1 398.9L235.1 368.5L235.1 366.9L235.7 365.7L236.8 365.0L247.4 361.7L259.5 358.6L271.9 356.1L278.0 355.1L290.4 353.6L303.0 352.7L315.5 352.4L321.8 352.5L334.2 353.2L340.5 353.8L352.9 355.4L359.1 356.5L365.3 357.7L377.4 360.6L389.5 364.1L401.2 368.2L407.1 370.5L418.5 375.5L424.1 378.2L429.7 381.1L440.5 387.2L451.1 393.9L461.2 401.1L466.2 404.9L475.7 412.8L480.3 417.0L489.3 425.7L497.6 434.8L501.7 439.5L509.4 449.3L516.5 459.4L519.8 464.6L526.2 475.3L531.9 486.3L537.1 497.5L539.4 503.2L543.6 514.8L547.3 526.6L550.2 538.6L552.6 550.7L554.3 563.0L555.3 575.4L555.7 587.7L555.4 600.0L555.0 606.2L553.7 618.5L551.8 630.8L549.2 642.9L547.7 648.9L543.8 661.7L543.1 662.8L542.0 663.4L540.9 663.5L540.2 663.3L539.0 662.2L531.9 649.8L525.9 637.8L518.5 620.7L504.7 586.2L496.6 566.7L488.1 547.4L480.0 530.4L479.8 529.1L480.2 528.1L487.6 518.7L475.0 512.1L471.6 510.0L468.6 507.7L466.5 505.8L464.0 502.9L461.7 499.7L459.6 496.1L459.5 494.8L460.0 493.6L460.8 492.9L463.2 491.6L463.9 490.9L464.7 489.5L465.4 486.3L465.7 482.1L465.4 476.3L464.2 470.4L462.4 464.6L459.6 457.6L457.0 452.4L454.2 447.6L450.9 442.9L448.4 439.7L444.5 435.4L440.4 431.6L437.2 429.1L432.6 425.9L429.0 423.8L423.9 421.3L416.4 418.6L410.8 417.3L406.9 416.7L399.1 416.4L394.9 416.6L389.3 417.4L381.5 419.4L376.2 421.5L372.6 423.3L366.0 427.5L359.9 432.8L356.0 436.9L353.4 440.1L350.2 444.7L348.1 448.0L344.7 455.3L342.3 462.8L340.7 472.2L339.9 483.4L340.0 489.3L340.5 494.3L340.2 495.8L339.3 496.7L338.3 497.1L332.2 497.0L326.5 497.9L322.6 499.2L319.2 501.0L316.0 503.8L313.0 507.6L311.0 511.3L309.6 516.0L309.0 521.0L309.2 525.1L310.3 529.8L312.1 533.7L315.0 537.7L318.2 540.7L321.8 542.9L325.9 544.1L329.1 544.3L333.1 543.7L336.3 542.3L339.7 540.0L342.1 537.3L343.8 534.4L344.8 531.2L345.0 527.8L344.6 526.0L344.0 524.4L342.2 521.8L340.9 520.6L338.7 519.2L337.6 519.0L336.7 519.1L335.7 519.6L335.0 520.5L334.6 521.6L334.7 522.7L335.4 523.9L337.3 525.2L338.4 526.3L339.0 527.6L339.2 529.2L339.0 530.8L338.4 532.2L336.4 535.2L334.7 536.5L332.8 537.6L330.7 538.3L328.2 538.6L326.2 538.3L324.2 537.6L322.3 536.5L320.4 535.0L317.9 532.0L316.1 528.6L314.9 524.3L314.8 520.4L315.6 515.8L317.1 512.0L319.6 508.3L322.3 505.9L324.2 504.8L326.4 503.9L328.7 503.3L331.7 502.9L337.5 503.0L340.7 503.5L342.9 504.1L343.9 505.0L345.8 508.1L348.5 510.0L355.6 522.9L364.6 541.1L372.3 559.0L372.3 559.8L372.1 560.8L367.3 568.1L369.7 572.9L378.4 573.7L379.8 574.4L380.5 575.4L448.6 770.9L448.8 771.7L448.6 772.7L448.3 773.4L447.5 774.1L420.7 781.0L399.7 786.7L398.6 786.8L397.6 786.4L363.3 765.1L362.6 763.7L362.7 762.4L363.6 761.1L371.0 741.2L371.5 740.3L372.4 739.6L373.4 739.4L378.0 739.2L385.2 737.4L386.5 737.4L387.4 737.8L400.7 746.7L394.4 725.0L394.4 723.4L395.4 722.1L396.9 721.5L407.9 723.1L392.3 707.5L391.7 706.6L391.5 705.6L391.9 704.1L393.1 703.1L402.2 701.0L387.6 694.1L386.9 693.7L386.3 692.8L386.0 691.3L386.7 689.9L393.7 684.7L373.7 684.1L372.4 683.7L371.6 683.0L371.3 682.3L371.1 681.2L372.0 678.6L370.8 678.8L369.7 678.5L368.7 677.7L368.3 676.7L368.7 671.0L368.5 664.8L367.8 660.5L366.1 654.5L364.5 650.6L361.5 645.1L359.0 641.7L356.2 638.5L353.1 635.6L349.8 633.1L346.2 630.8L342.5 628.9L338.5 627.4L334.5 626.3L330.4 625.5L326.2 625.1L319.9 625.3L313.8 626.4L309.6 627.6L304.0 630.1L300.2 632.3L295.2 636.1L290.8 640.5L287.1 645.5L284.1 651.1L281.9 657.0L280.5 663.1L280.1 669.5L280.6 675.8L281.9 682.0L283.3 685.9L285.1 689.7L286.1 691.6L287.2 692.4L287.9 693.2L288.1 694.0L288.0 695.1L287.6 696.0L287.0 696.6L286.0 697.0L285.0 697.1L277.5 693.5L278.7 703.5L278.4 705.0L277.8 705.8L267.9 715.1L278.6 717.0L279.6 717.5L280.4 718.5L280.6 720.0L280.0 721.2L271.1 730.8L281.9 730.8L283.3 731.4L284.2 732.8L284.3 733.6L284.1 734.6L276.7 750.9L289.5 745.7L291.0 745.9L291.7 746.3L292.4 747.1L292.7 748.4L292.7 772.8L307.1 755.8L307.9 755.1L308.9 754.8L310.7 755.2L331.9 769.1L333.4 769.5L334.2 770.5L334.5 771.8L334.2 773.1L314.8 807.3L314.0 808.0L313.0 808.4L295.1 811.7L293.6 811.5L292.7 810.9L292.0 809.8L291.1 802.7L290.3 800.4L289.3 798.3L286.6 794.6L283.1 791.6L278.9 789.0L274.2 786.7L254.2 778.9L242.6 773.9L236.1 770.3L231.6 766.6L228.6 763.1L226.6 759.1L225.7 754.7L225.9 750.5L226.4 749.6L227.2 749.0L240.4 744.0L238.8 730.1L237.1 719.6L235.2 711.3L231.6 698.5L230.6 692.7L230.7 688.1L231.5 683.4L233.1 678.9L235.6 673.6L233.5 671.5L211.0 680.2L209.7 680.4L208.7 680.1L206.9 678.8L204.2 676.0L202.2 672.4L201.7 670.5L201.6 669.4L202.3 668.0L203.7 667.2L208.5 667.4L214.8 667.1L221.1 666.1L227.2 664.3L232.8 662.0L238.4 658.9L243.6 655.2L246.2 652.9L250.6 648.4L254.5 643.3L257.6 638.1L260.3 632.3L261.4 629.1L263.0 622.9L263.8 616.6L264.0 610.2L263.4 604.2L262.8 601.0L262.0 597.7L260.0 591.9L258.7 588.8L255.7 583.4L251.9 578.0L249.9 575.6L245.5 571.3L242.9 569.1L237.9 565.6L234.9 563.9L229.4 561.3L226.1 560.1L220.2 558.6L213.7 557.6L207.6 557.4L204.1 557.6L198.1 558.5L194.8 559.3L189.0 561.2L185.8 562.5L180.4 565.4L177.7 567.1L175.0 569.2L170.4 573.2L166.0 578.1L162.4 583.1L160.7 586.1L158.0 591.8L156.0 597.9L154.7 603.8L154.3 607.0L154.0 613.3L154.5 619.9L155.0 623.1L156.6 629.0L157.9 632.6L158.7 633.5L160.1 634.2L160.9 634.8L161.5 636.0L161.5 637.0L152.3 664.2L145.4 683.0L143.9 689.2L142.4 699.7ZM408.2 580.5L417.0 607.8L420.3 618.9L423.1 630.2L425.1 641.2L426.8 640.3L428.9 638.8L432.0 635.5L435.2 630.6L440.5 620.0L443.4 615.2L446.8 610.8L448.6 609.1L449.8 608.6L451.1 608.8L452.4 609.7L456.5 617.4L460.2 626.4L463.4 637.1L465.7 648.0L466.5 656.5L466.2 663.7L464.7 672.1L462.8 678.8L460.5 685.4L454.8 699.5L450.7 708.1L446.1 716.6L444.4 719.5L443.1 720.3L442.1 720.4L441.3 720.2L440.4 719.6L439.9 718.7L417.9 660.8L387.5 573.8L387.4 572.7L387.5 571.9L387.9 571.2L388.8 570.5L400.4 564.1L401.4 563.8L402.7 564.0L403.7 564.7L404.3 565.6ZM387.8 508.8L397.8 505.4L399.4 505.7L400.4 506.5L400.9 507.7L401.2 513.3L401.9 519.3L403.8 528.7L403.6 530.0L402.7 531.0L401.5 531.5L397.4 531.8L393.5 531.8L389.6 531.4L382.4 529.9L375.5 527.4L370.5 524.7L366.4 521.5L359.7 514.8L354.8 509.0L354.3 507.3L355.0 504.7L354.9 503.1L352.9 498.7L351.6 494.7L350.9 490.2L350.7 485.4L351.1 476.8L351.9 470.1L353.2 463.7L354.7 459.2L356.7 454.9L359.2 450.7L362.0 446.7L365.3 442.8L368.7 439.3L372.4 436.2L376.4 433.6L380.5 431.4L384.9 429.7L389.6 428.4L394.5 427.5L399.3 427.2L404.1 427.3L408.7 427.9L413.4 429.0L418.0 430.6L421.1 431.9L425.3 434.1L432.0 438.7L438.0 444.3L443.2 450.6L447.6 457.6L449.7 462.0L451.7 466.7L453.3 471.5L454.4 476.1L454.9 480.5L454.7 481.7L454.0 482.8L452.8 483.4L451.8 483.4L450.6 482.9L439.4 471.1L430.6 462.8L423.1 457.0L419.1 454.5L415.9 452.9L411.6 451.1L408.3 450.1L404.9 449.4L401.4 449.0L397.9 448.9L394.4 449.1L391.0 449.8L387.8 450.8L384.9 452.3L382.3 454.2L380.0 456.5L378.0 459.3L376.4 462.2L375.2 465.4L374.5 468.7L374.2 473.3L374.8 478.9L376.4 484.4L378.7 489.8L385.5 503.1ZM369.4 530.8L375.9 533.9L380.8 535.5L385.9 536.7L390.3 537.3L396.9 537.6L403.5 537.1L409.3 535.9L415.9 533.7L417.9 534.2L418.8 534.7L419.6 535.8L419.8 537.1L419.3 538.3L418.3 539.2L380.2 558.7L379.4 559.0L378.3 559.0L377.3 558.6L376.3 557.6L368.4 539.3L365.9 534.1L365.8 533.4L366.1 532.3L366.7 531.5L367.6 530.9L368.6 530.7ZM349.3 768.7L349.9 768.0L350.9 767.4L352.1 767.3L353.3 767.7L385.4 787.6L386.1 788.4L386.4 789.1L386.5 790.2L386.1 791.1L385.2 792.1L384.0 792.5L334.3 804.4L333.2 804.5L332.3 804.1L331.6 803.6L331.1 802.7L330.9 801.7L331.2 800.7ZM281.7 673.6L281.5 669.5L281.7 665.5L282.2 661.4L283.2 657.5L284.5 653.6L286.2 649.8L288.3 646.3L290.6 643.0L293.3 639.9L296.2 637.1L301.0 633.5L304.5 631.4L308.2 629.7L312.0 628.3L316.0 627.3L320.0 626.7L324.1 626.5L328.1 626.7L332.2 627.2L336.3 628.2L341.9 630.2L345.5 632.1L348.9 634.2L352.2 636.7L355.2 639.6L357.9 642.6L360.3 645.9L362.4 649.4L364.1 653.1L365.5 657.0L366.4 660.9L367.1 664.9L367.3 670.9L366.9 675.1L365.7 680.9L364.4 684.8L363.4 686.5L358.1 691.4L356.9 691.9L355.8 691.8L355.1 691.5L354.3 690.8L354.0 690.1L352.5 680.4L348.7 686.1L347.6 686.8L346.0 686.8L344.6 685.8L341.8 681.2L336.0 674.5L328.2 672.1L320.3 674.5L307.0 687.5L305.8 687.8L304.5 687.5L299.5 683.3L291.5 691.8L290.4 692.4L289.1 692.4L288.1 692.0L287.4 691.2L284.6 685.3L282.7 679.5ZM277.9 300.2L277.9 305.2L277.4 308.4L276.6 311.6L275.5 314.6L274.1 317.4L272.3 320.2L270.3 322.8L266.6 326.3L264.0 328.2L261.1 329.9L258.1 331.3L255.1 332.3L251.9 333.0L248.6 333.5L245.2 333.5L241.9 333.3L236.9 332.2L233.8 331.1L230.8 329.7L228.1 328.1L225.5 326.1L223.1 323.9L220.9 321.4L218.1 317.2L216.7 314.3L215.6 311.2L214.9 308.2L214.5 305.0L214.5 300.0L215.0 296.7L215.8 293.6L216.9 290.6L218.3 287.8L220.1 285.0L222.1 282.4L225.8 278.9L228.4 277.0L231.3 275.3L234.3 274.0L237.3 272.9L240.5 272.2L243.8 271.8L247.2 271.7L250.5 272.0L255.5 273.0L258.6 274.1L261.6 275.5L264.3 277.1L266.9 279.1L269.3 281.3L271.5 283.8L274.3 288.0L275.7 290.9L276.8 294.0L277.5 297.1ZM160.8 605.0L161.9 599.5L162.8 596.6L165.0 591.4L167.6 586.6L169.2 584.1L172.8 579.7L176.8 575.7L181.1 572.4L185.9 569.4L188.6 568.1L193.7 566.1L199.1 564.6L204.7 563.8L207.7 563.6L213.2 563.8L216.1 564.1L221.5 565.2L224.4 566.1L229.5 568.1L234.4 570.8L236.9 572.4L241.4 575.9L245.3 579.8L248.8 584.2L250.4 586.6L253.1 591.6L255.2 596.7L256.7 602.1L257.2 605.1L257.8 610.5L257.7 616.2L257.3 619.1L256.3 624.5L255.4 627.4L253.5 632.5L250.9 637.5L247.7 642.1L245.8 644.5L242.0 648.4L239.7 650.3L235.1 653.6L230.3 656.3L227.6 657.5L222.4 659.3L219.5 660.0L214.1 660.9L211.2 661.1L205.2 661.1L202.9 661.4L201.7 660.8L201.1 660.0L200.8 658.9L200.8 657.2L201.5 653.5L202.1 652.0L203.3 650.5L205.0 649.2L207.2 648.1L215.9 645.6L219.5 643.9L223.7 640.7L230.2 634.1L226.5 617.3L224.8 610.8L222.4 604.8L219.9 600.6L216.8 597.1L213.9 594.9L210.6 593.2L207.1 592.0L203.6 591.4L199.9 591.5L196.3 592.1L191.6 593.8L189.4 594.9L186.3 597.0L183.5 599.4L181.0 602.2L177.8 606.3L173.5 612.9L170.1 618.6L166.6 625.3L165.7 626.2L164.5 626.5L163.2 626.3L162.1 625.3L161.1 621.7L160.4 616.2L160.2 613.3L160.4 607.8Z" fill="#ead93e" stroke="#b5601c" stroke-width=".5" fill-rule="evenodd"/><path d="M284.8 287.4L281.9 281.8L278.1 276.7L273.5 272.2L270.1 269.6L264.4 266.4L260.4 264.8L254.1 263.1L249.8 262.5L243.2 262.5L238.9 263.0L234.6 264.0L228.5 266.3L224.6 268.3L219.3 272.0L216.1 274.9L212.0 279.8L209.7 283.3L207.8 287.1L206.3 291.1L205.2 295.2L204.6 299.3L204.5 303.5L204.8 307.7L205.6 311.8L206.8 315.9L208.4 319.8L210.4 323.5L212.9 327.0L217.2 331.7L220.5 334.4L225.1 337.6L226.2 338.9L227.1 341.6L226.6 344.3L225.6 345.8L223.8 347.1L215.4 350.3L202.8 355.7L184.6 364.9L167.1 375.5L150.5 387.4L140.0 396.0L129.9 405.1L115.8 419.8L102.9 435.5L91.3 452.1L84.3 463.7L77.9 475.6L69.5 494.1L62.6 513.1L57.3 532.6L53.5 552.5L51.4 572.6L50.9 592.9L51.9 613.1L53.6 626.5L55.9 639.8L59.0 653.0L62.7 666.0L67.2 678.9L72.4 691.4L81.3 709.8L88.1 721.6L95.5 733.0L103.6 744.1L112.2 754.7L121.4 764.9L131.1 774.6L146.6 788.2L157.5 796.5L168.9 804.3L180.7 811.5L192.9 818.1L205.4 824.0L218.2 829.3L237.9 836.0L251.4 839.6L265.0 842.5L278.7 844.7L292.5 846.1L313.4 847.0L327.3 846.7L341.2 845.6L361.9 842.7L375.5 839.9L388.9 836.4L402.2 832.2L415.1 827.3L427.8 821.8L440.2 815.6L458.1 805.1L469.6 797.4L480.6 789.1L491.1 780.2L501.1 770.9L510.7 761.0L519.6 750.6L532.0 734.3L539.5 722.9L546.4 711.1L552.6 699.0L558.2 686.7L563.1 674.0L567.3 661.1L572.3 641.5L574.8 628.2L576.5 614.8L577.5 601.3L577.8 587.8L577.4 574.4L576.3 560.9L573.2 541.0L568.6 521.3L562.4 502.1L557.4 489.5L551.8 477.3L542.2 459.5L535.0 448.0L527.2 437.0L514.4 421.2L505.2 411.3L495.5 401.8L485.3 392.9L474.7 384.5L463.6 376.6L452.1 369.3L440.2 362.6L428.1 356.5L415.6 351.1L396.3 344.1L383.2 340.3L369.9 337.1L356.5 334.6L342.9 332.9L329.3 331.8L315.6 331.4L301.9 331.7L286.4 332.8L283.7 332.2L282.3 331.2L281.3 329.8L280.7 328.2L280.6 326.5L281.0 324.9L283.8 320.0L286.1 314.1L287.2 310.1L287.9 303.8L287.8 299.6L287.2 295.4L286.3 291.4ZM145.5 699.2L147.3 699.4L149.2 700.5L150.3 701.7L152.1 705.0L153.8 709.2L155.1 713.7L156.3 722.6L156.3 731.5L155.1 749.5L154.8 758.3L154.1 760.4L153.0 761.7L151.6 762.6L149.4 763.1L147.7 762.9L145.7 762.0L135.6 751.9L123.1 737.7L111.7 722.5L104.8 711.9L98.4 700.8L92.7 689.5L85.3 672.3L81.2 660.4L77.6 648.2L74.8 635.9L71.8 617.5L70.6 605.0L70.0 592.3L70.5 573.6L71.7 561.0L73.5 548.6L76.0 536.3L79.1 524.2L82.9 512.2L87.3 500.5L92.3 489.0L98.0 477.7L107.4 461.6L114.5 451.2L122.1 441.2L130.2 431.6L138.9 422.3L148.0 413.6L157.5 405.3L167.5 397.5L183.1 387.0L199.6 377.5L210.9 372.0L219.9 368.1L221.5 367.7L223.7 367.9L225.2 368.6L226.8 370.2L227.5 371.7L227.8 373.3L228.2 403.7L227.8 405.9L226.2 408.2L223.8 409.4L205.6 410.0L213.3 424.9L213.7 427.0L213.5 428.6L212.8 430.1L211.7 431.4L193.9 443.7L215.7 448.3L217.3 448.9L218.6 449.9L219.6 451.3L220.2 453.5L219.8 469.8L235.6 461.7L238.3 461.3L240.9 462.2L242.4 463.8L255.3 482.9L258.2 463.9L258.7 462.3L259.7 460.9L261.1 459.8L262.7 459.2L281.5 457.1L273.8 440.5L273.5 438.9L273.8 436.7L274.6 435.2L275.8 434.0L292.4 421.7L272.3 418.1L270.7 417.6L269.4 416.7L268.3 415.3L267.6 413.2L267.1 396.2L249.8 403.6L247.1 403.5L244.7 402.2L243.2 399.9L232.3 369.5L231.9 367.8L232.1 366.1L233.1 364.1L235.4 362.3L252.8 357.2L271.4 353.2L283.8 351.3L296.4 350.0L309.2 349.4L328.3 349.8L347.2 351.5L365.8 354.7L384.2 359.3L396.4 363.2L414.0 370.1L425.6 375.5L442.2 384.6L457.9 394.9L468.1 402.6L482.3 414.8L495.7 428.1L504.1 437.7L515.4 452.5L522.5 463.1L531.8 479.3L537.3 490.5L542.3 502.2L546.6 513.9L551.8 531.8L554.5 544.0L556.5 556.4L557.9 568.8L558.6 581.5L558.4 600.1L557.5 612.8L555.8 625.2L552.1 643.7L546.7 662.7L545.9 664.2L544.7 665.4L543.3 666.2L541.6 666.5L540.0 666.4L538.4 665.8L536.4 663.8L530.4 653.5L524.3 641.5L516.7 624.3L493.8 567.9L485.3 548.6L477.1 531.5L476.8 529.2L477.4 526.9L483.0 519.6L472.4 514.1L466.5 509.9L461.6 504.8L457.0 497.7L456.4 494.9L457.0 492.8L458.7 490.6L461.5 489.0L462.3 486.3L462.7 480.2L461.6 472.8L458.9 463.9L454.4 453.9L451.6 449.1L448.5 444.7L442.5 437.7L436.9 432.6L429.3 427.5L422.7 424.1L415.7 421.6L408.4 420.0L401.0 419.4L393.6 419.8L386.1 421.3L379.0 423.6L372.4 426.9L366.3 431.1L360.8 436.2L354.8 443.3L350.8 449.6L347.5 456.4L345.3 463.5L344.0 470.7L343.1 479.8L343.0 487.2L343.5 495.2L342.8 497.3L341.8 498.6L340.4 499.6L338.9 500.1L343.2 501.0L345.2 502.1L346.4 503.3L347.8 505.7L350.1 507.4L351.8 509.8L351.3 507.1L351.9 503.7L350.1 499.8L348.7 495.5L348.0 492.0L347.7 487.0L347.9 480.0L348.7 471.4L349.9 464.6L351.4 459.6L353.3 454.9L356.6 449.1L359.7 444.7L364.1 439.6L368.0 435.9L372.0 432.8L376.3 430.1L380.9 427.9L387.2 425.9L392.5 424.8L399.1 424.2L404.2 424.3L409.2 424.9L414.4 426.1L420.7 428.4L425.5 430.7L429.9 433.4L435.2 437.4L439.1 441.0L443.7 446.2L447.6 451.7L450.3 456.2L453.2 462.3L455.6 468.9L457.6 477.1L458.0 480.7L457.7 482.3L456.7 484.3L455.5 485.4L453.5 486.3L451.3 486.4L449.7 485.9L448.3 484.9L436.4 472.4L426.8 463.6L419.5 458.3L412.7 454.8L407.5 453.1L403.3 452.2L399.0 451.9L394.8 452.2L390.8 453.0L387.3 454.4L385.0 455.9L382.3 458.5L379.6 462.6L378.4 465.3L377.7 468.2L377.2 474.3L378.2 480.3L381.0 487.4L387.2 499.6L389.6 505.0L396.3 502.7L398.6 502.4L401.2 503.2L402.5 504.3L403.4 505.7L403.9 507.3L404.9 518.9L406.8 528.5L406.7 530.2L406.0 531.8L404.9 533.1L403.6 534.0L408.5 532.9L414.7 530.8L417.0 530.8L419.9 531.8L421.6 533.2L422.6 535.2L422.8 537.5L422.1 539.6L420.2 541.6L381.6 561.4L379.9 562.0L378.5 562.0L376.7 561.7L375.2 560.9L374.5 562.7L370.8 568.3L371.6 570.0L378.5 570.6L380.5 571.2L382.2 572.6L383.3 574.4L451.5 769.9L451.8 771.5L451.5 773.7L450.3 775.6L449.1 776.7L447.5 777.3L421.4 783.9L400.5 789.7L398.2 789.8L396.0 789.0L361.4 767.5L359.9 765.2L359.6 763.6L359.7 761.9L361.0 759.5L368.1 740.1L369.7 737.8L372.2 736.5L377.6 736.2L386.1 734.3L388.6 735.0L395.5 739.5L391.5 725.8L391.4 723.0L392.7 720.4L394.5 719.0L396.7 718.5L399.2 718.7L390.1 709.7L388.7 707.3L388.5 705.1L389.1 703.0L390.5 701.3L392.9 700.0L385.8 696.6L383.8 694.6L383.0 692.5L383.0 690.8L383.5 689.2L384.8 687.5L372.5 687.0L370.0 685.7L368.9 684.3L368.3 682.9L366.3 687.8L360.4 693.4L357.9 694.8L355.1 694.8L353.5 694.1L351.9 692.6L351.1 691.1L350.6 688.5L348.9 689.5L347.3 689.9L345.6 689.8L343.9 689.2L342.2 687.7L339.4 683.0L334.3 677.1L328.2 675.3L321.9 677.2L309.8 689.2L308.4 690.2L306.3 690.8L304.1 690.6L302.5 689.8L299.8 687.5L293.5 694.1L291.1 695.4L290.0 697.9L288.3 699.4L286.7 700.0L285.0 700.1L283.4 699.8L281.2 698.7L281.7 703.6L281.2 706.3L279.9 708.0L274.4 713.2L280.5 714.5L282.6 716.3L283.5 718.3L283.6 720.5L282.8 722.6L278.1 727.8L282.2 727.8L283.8 728.2L286.1 729.9L287.1 732.0L287.3 733.7L287.0 735.3L282.6 745.2L288.4 742.9L290.6 742.7L293.2 743.7L294.4 744.8L295.3 746.2L295.7 748.4L295.7 764.5L305.2 753.4L307.0 752.2L309.7 751.8L312.3 752.7L333.0 766.1L335.1 767.0L336.3 768.2L337.2 769.7L337.5 771.9L336.8 774.6L317.6 808.5L316.5 809.8L314.1 811.2L295.7 814.7L294.0 814.7L292.4 814.3L290.5 813.0L289.3 811.1L288.1 803.5L286.6 799.8L284.4 796.7L281.3 794.0L277.4 791.6L273.0 789.5L251.8 781.2L241.3 776.6L234.5 772.8L229.5 768.9L226.3 765.1L224.4 761.6L222.9 756.9L222.6 752.6L223.0 749.5L223.8 748.0L224.9 746.8L226.4 746.0L237.1 742.0L235.6 729.4L234.1 720.1L232.3 712.0L228.7 699.2L227.6 693.1L227.6 688.9L228.1 685.0L229.4 680.2L231.2 675.7L211.5 683.2L209.3 683.4L207.7 683.0L205.1 681.2L202.7 678.9L201.1 676.9L199.7 674.2L198.6 670.7L198.7 668.4L200.1 665.9L202.7 664.4L200.8 663.8L199.4 662.8L198.2 660.9L197.8 659.2L198.0 655.1L198.6 652.4L199.9 649.9L201.6 648.0L203.5 646.6L206.0 645.3L214.9 642.7L217.9 641.3L221.6 638.5L226.9 633.1L223.0 615.4L220.2 607.2L218.1 603.3L215.5 600.1L212.2 597.5L209.4 596.0L205.4 594.7L202.3 594.4L198.1 594.8L193.9 596.1L189.0 598.7L184.0 603.2L180.3 608.0L176.7 613.4L168.9 627.3L166.8 629.0L164.7 629.6L163.0 629.4L161.5 628.8L160.2 627.8L159.2 626.5L157.7 619.5L157.2 613.6L157.4 607.6L158.4 601.3L160.0 595.6L163.5 587.6L166.6 582.6L170.4 577.9L174.6 573.6L179.6 569.7L187.1 565.4L192.7 563.2L198.5 561.7L204.4 560.8L210.7 560.6L216.7 561.1L225.1 563.1L230.7 565.3L238.7 570.0L245.6 575.7L251.4 582.6L255.9 590.4L259.0 598.8L260.6 607.7L260.7 616.6L259.1 625.5L256.1 634.0L251.7 641.8L246.0 648.7L239.2 654.5L231.4 659.1L223.0 662.3L214.5 663.9L205.1 664.2L208.5 664.4L214.3 664.1L223.3 662.4L231.7 659.1L237.0 656.2L241.7 652.8L246.3 648.6L250.2 644.1L253.5 639.3L255.0 636.6L257.5 631.0L258.5 628.2L260.0 622.5L260.8 616.4L260.7 607.6L259.8 601.6L258.2 595.7L256.0 590.2L254.6 587.6L251.4 582.3L245.7 575.6L241.2 571.6L236.1 568.1L233.5 566.6L228.2 564.1L222.3 562.2L219.4 561.5L213.6 560.6L210.5 560.5L204.6 560.6L201.5 561.0L195.7 562.2L192.7 563.1L187.3 565.2L179.4 569.7L174.6 573.5L170.4 577.6L168.4 580.0L165.0 584.8L163.5 587.4L160.8 592.9L158.9 598.6L158.2 601.5L157.3 607.3L157.0 613.5L157.5 619.3L158.0 622.3L159.5 628.1L160.5 631.0L162.5 632.1L163.9 633.8L164.5 635.3L164.5 637.5L155.2 665.2L148.3 683.9L146.9 689.8ZM411.2 579.6L422.7 616.2L425.2 625.7L427.3 636.1L429.6 633.7L431.6 630.7L438.4 617.6L442.3 611.5L446.8 606.7L448.8 605.7L450.5 605.6L452.7 606.1L454.5 607.5L458.6 614.7L461.0 620.1L463.5 626.7L467.0 639.1L468.9 649.1L469.6 658.0L468.9 666.9L466.9 675.5L461.9 690.4L455.2 705.8L447.1 721.0L445.9 722.2L443.9 723.2L441.7 723.4L439.6 722.7L437.9 721.2L437.0 719.7L415.0 661.8L384.7 574.7L384.3 573.1L384.5 571.3L385.6 569.3L387.3 567.8L399.5 561.2L401.1 560.8L403.3 561.0L405.6 562.3L406.9 564.1ZM346.7 767.2L348.0 765.6L350.0 764.5L352.4 764.3L354.9 765.1L387.3 785.2L388.4 786.4L389.4 788.4L389.5 790.6L388.7 792.7L387.2 794.3L384.7 795.5L335.0 807.4L332.8 807.5L330.7 806.7L329.4 805.7L328.3 803.8L327.9 801.6L328.4 799.5ZM280.9 299.9L280.9 305.6L279.5 312.6L276.8 318.9L272.6 324.7L268.5 328.7L262.5 332.6L256.0 335.2L248.9 336.5L241.6 336.3L236.0 335.1L229.3 332.4L223.6 328.5L218.6 323.4L215.4 318.6L212.7 312.0L211.5 305.3L211.5 299.6L212.9 292.6L215.7 286.3L219.8 280.5L223.9 276.6L230.0 272.6L236.4 270.1L243.5 268.8L250.8 269.0L256.4 270.1L263.1 272.9L268.8 276.7L273.8 281.9L276.9 286.6L279.7 293.2ZM363.2 531.4L364.2 529.7L365.9 528.3L368.1 527.7L369.9 527.9L366.0 525.1L361.9 521.4L356.0 515.3L352.2 510.5L358.3 521.5ZM282.0 288.6L279.3 283.4L277.1 280.2L274.5 277.2L271.6 274.5L266.7 271.0L263.2 269.2L259.4 267.6L255.5 266.5L249.5 265.6L245.4 265.4L241.4 265.7L237.4 266.4L233.5 267.5L229.7 269.0L226.1 270.9L221.2 274.3L218.3 277.0L215.6 280.0L213.3 283.2L210.5 288.3L209.2 292.0L208.2 295.8L207.7 299.6L207.6 305.4L208.5 311.1L209.6 314.8L212.0 320.2L214.1 323.5L216.5 326.6L219.3 329.5L222.3 332.0L227.1 335.3L229.2 338.0L230.0 340.5L230.1 342.3L229.7 344.8L228.4 347.1L227.3 348.4L225.1 349.9L216.5 353.1L204.1 358.4L186.0 367.5L168.8 378.0L157.7 385.7L142.0 398.3L127.3 412.0L113.7 426.9L101.3 442.7L93.8 453.8L86.9 465.2L77.7 483.0L72.3 495.2L67.6 507.7L61.8 526.8L58.8 539.8L56.5 553.0L54.4 572.8L53.9 592.8L55.0 612.8L56.6 626.1L58.9 639.2L61.9 652.3L65.6 665.1L70.0 677.8L75.1 690.2L84.0 708.3L90.7 720.0L98.0 731.3L106.0 742.2L114.5 752.7L123.5 762.8L133.2 772.4L148.5 785.8L159.3 794.1L170.6 801.8L182.2 808.9L194.3 815.4L206.6 821.3L219.3 826.5L238.8 833.1L252.1 836.6L265.5 839.5L279.1 841.7L292.8 843.1L313.4 844.0L327.2 843.7L340.9 842.6L361.3 839.8L374.8 837.0L388.1 833.5L401.2 829.3L414.0 824.5L426.6 819.0L438.8 812.9L456.5 802.6L467.8 794.9L478.7 786.7L489.1 778.0L499.0 768.7L508.4 758.9L517.3 748.7L529.5 732.6L536.9 721.3L543.7 709.7L549.9 697.7L555.4 685.5L560.2 673.0L564.4 660.3L569.4 640.8L571.8 627.7L573.5 614.5L574.5 601.2L574.8 587.8L574.4 574.5L573.3 561.3L570.2 541.5L565.7 522.1L559.6 503.1L554.6 490.7L549.1 478.6L539.6 461.0L532.4 449.7L524.7 438.8L512.1 423.2L503.0 413.4L493.4 404.1L483.4 395.2L472.8 386.9L461.9 379.1L450.5 371.9L438.8 365.3L426.8 359.3L414.4 353.9L395.4 347.0L382.4 343.2L369.3 340.1L356.0 337.6L342.6 335.9L322.3 334.5L302.0 334.7L286.4 335.9L284.7 335.7L282.3 334.9L280.2 333.3L278.6 331.3L277.9 329.7L277.6 327.1L278.2 323.7L281.1 318.7L282.6 315.1L283.8 311.4L284.5 307.6L284.9 303.7L284.6 297.9L283.4 292.2ZM148.9 696.8L151.1 698.1L152.8 700.0L154.9 703.8L156.7 708.2L158.7 716.4L159.2 721.1L159.5 727.0L157.7 759.6L156.2 762.7L154.3 764.5L152.1 765.7L149.5 766.1L147.0 765.9L144.6 764.9L137.8 758.6L124.9 744.6L112.9 729.5L105.6 718.9L98.8 707.8L90.0 691.0L84.8 679.1L80.3 667.2L74.7 649.1L71.8 636.7L69.6 623.9L68.0 611.3L67.0 592.5L67.2 579.8L68.0 566.9L69.5 554.3L71.7 541.8L74.5 529.4L80.0 511.4L84.4 499.5L89.5 487.9L95.2 476.5L101.6 465.2L108.5 454.5L115.9 444.2L123.9 434.2L136.6 420.3L145.8 411.4L155.6 402.9L165.7 395.1L181.4 384.4L198.3 374.8L209.6 369.2L218.7 365.3L221.2 364.7L224.6 365.0L226.9 366.1L228.9 368.0L229.2 365.4L230.2 363.0L231.9 361.0L234.1 359.6L252.1 354.2L270.9 350.2L283.4 348.3L296.1 347.0L309.0 346.4L321.8 346.5L334.6 347.2L347.4 348.5L360.1 350.5L372.7 353.1L385.1 356.4L397.3 360.3L409.3 364.8L421.0 369.9L432.4 375.7L443.6 381.9L459.8 392.6L470.0 400.2L479.8 408.4L489.2 417.1L497.9 426.0L506.3 435.6L514.1 445.6L525.0 461.5L534.4 477.8L540.0 489.2L545.1 501.1L549.4 513.0L554.7 531.1L557.4 543.4L559.5 556.2L560.9 568.8L561.7 587.6L561.5 600.5L559.8 619.2L557.7 632.0L553.6 650.4L549.2 664.4L547.8 666.6L545.9 668.3L544.3 669.0L541.8 669.6L539.3 669.3L537.7 668.8L535.5 667.4L533.8 665.4L525.2 650.1L516.0 630.4L492.1 571.5L483.6 552.3L474.3 532.6L473.8 529.9L474.3 526.4L475.1 524.8L478.3 520.7L469.6 515.9L463.6 511.4L459.1 506.5L454.2 498.9L453.4 495.6L453.9 492.3L455.6 489.4L456.9 488.2L459.1 487.0L459.3 485.8L457.2 487.9L454.1 489.3L450.7 489.4L447.6 488.2L446.2 487.1L432.6 472.9L423.2 464.5L418.8 461.4L414.3 458.8L409.6 456.9L405.8 455.8L400.9 455.0L397.1 455.0L393.4 455.5L389.4 456.8L386.2 458.8L384.1 461.1L381.9 464.7L380.8 467.9L380.4 470.5L380.3 474.1L380.5 476.8L381.4 480.4L383.7 486.1L391.3 501.2L396.2 499.6L398.7 499.4L402.1 500.2L404.8 502.3L405.8 503.7L406.7 506.1L407.7 516.8L409.8 527.5L409.9 529.3L415.0 527.7L417.7 527.8L420.6 528.8L422.8 530.1L424.5 532.0L425.5 534.4L425.9 536.9L425.7 538.6L424.8 541.1L423.8 542.5L421.8 544.2L383.0 564.1L380.4 564.9L376.7 564.8L375.1 567.3L379.6 567.7L382.3 568.8L383.8 566.8L385.1 565.6L397.5 558.8L399.9 557.9L403.3 557.9L404.9 558.3L407.1 559.6L408.8 561.4L410.0 563.7L414.1 578.8L425.1 613.4L429.1 629.0L436.9 614.1L441.6 607.6L444.3 604.9L446.4 603.4L448.9 602.6L452.3 602.8L454.7 603.8L456.7 605.5L461.3 613.4L463.8 618.9L466.4 625.7L470.0 638.5L472.2 651.6L472.5 661.3L472.1 666.0L470.9 672.1L467.2 684.8L463.7 694.2L459.2 704.5L454.1 714.6L449.5 722.8L447.0 725.1L444.7 726.2L442.1 726.5L439.4 725.9L454.6 769.7L454.8 772.3L454.0 775.5L452.6 777.7L450.6 779.3L448.3 780.3L400.4 792.8L396.9 792.6L395.2 792.0L392.5 790.4L392.1 792.7L390.9 794.9L389.1 796.7L386.4 798.1L334.8 810.5L331.5 810.3L329.9 809.7L327.8 808.3L325.8 805.6L325.2 804.0L324.9 801.7L319.7 810.7L318.6 812.0L316.5 813.5L314.1 814.3L294.5 817.8L292.8 817.6L290.4 816.7L287.8 814.5L286.2 811.4L285.4 805.1L284.4 801.9L282.2 798.8L278.7 795.9L271.8 792.3L242.7 780.6L235.7 777.1L231.2 774.2L226.2 769.8L222.8 765.2L220.4 759.6L219.6 754.6L219.9 749.3L220.5 747.7L221.9 745.6L224.5 743.5L233.9 740.0L232.5 728.8L230.9 719.7L229.1 711.8L226.0 701.0L224.8 694.8L224.6 687.7L225.9 681.0L212.3 686.1L209.8 686.5L207.3 686.0L205.7 685.3L203.2 683.6L199.6 679.9L197.1 675.7L195.6 671.1L195.8 667.6L197.2 664.8L195.7 662.8L195.1 661.2L194.7 659.5L194.8 655.9L195.5 652.1L197.4 648.2L200.1 645.3L203.1 643.3L207.0 641.8L214.0 639.9L216.3 638.8L219.1 636.7L223.5 632.2L219.7 615.0L218.2 610.5L216.5 606.6L214.5 603.5L212.1 601.1L209.0 599.2L205.7 597.9L201.4 597.5L196.8 598.2L192.4 600.2L188.5 603.0L184.9 607.0L181.4 611.8L176.7 619.4L171.3 629.1L169.5 630.9L166.5 632.3L167.6 635.5L167.3 638.9L158.0 666.2L151.6 683.7L150.1 689.3ZM283.9 299.6L283.9 305.9L283.3 309.8L282.4 313.6L279.4 320.3L277.4 323.6L274.9 326.7L270.4 331.1L267.2 333.4L263.8 335.3L256.9 338.1L253.1 339.0L249.2 339.5L245.2 339.6L241.3 339.3L235.1 338.0L231.4 336.7L227.8 335.0L221.7 330.9L218.8 328.2L216.2 325.3L212.7 320.0L211.1 316.5L209.8 312.8L208.4 305.6L208.5 299.3L209.1 295.4L210.1 291.6L213.0 284.9L215.1 281.6L217.5 278.5L222.1 274.2L225.2 271.9L228.6 269.9L235.5 267.2L243.2 265.8L251.1 265.9L257.3 267.2L261.0 268.6L264.6 270.2L270.7 274.4L273.6 277.0L276.1 279.9L279.6 285.2L281.3 288.7L282.6 292.4ZM340.6 771.8L344.8 764.6L347.5 762.3L350.0 761.4L351.9 761.3L354.3 761.6L356.5 762.6L357.0 760.4L358.3 757.9L365.6 738.3L366.5 736.8L368.3 735.0L371.4 733.6L377.1 733.2L384.5 731.3L387.8 731.4L390.3 732.4L388.4 725.8L388.3 723.2L389.0 720.6L389.9 719.1L391.0 717.8L392.8 716.5L388.0 711.8L386.5 709.8L385.6 707.4L385.5 704.8L386.1 702.4L387.0 700.6L383.5 698.7L381.7 696.9L380.2 693.8L380.0 690.4L372.6 690.1L369.2 688.9L367.5 691.0L361.0 696.7L357.8 697.9L354.4 697.7L352.7 697.1L350.6 695.7L348.5 692.8L344.9 692.7L341.7 691.3L339.8 689.5L336.9 684.8L332.5 679.8L328.2 678.4L323.5 679.9L311.9 691.3L309.9 692.9L307.4 693.7L304.8 693.8L302.3 693.1L300.0 691.7L295.5 696.4L293.5 697.7L292.4 699.7L290.5 701.5L287.4 702.9L284.7 703.1L284.6 705.2L283.9 707.6L282.6 709.6L280.8 711.3L282.6 712.2L284.5 713.9L285.5 715.3L286.4 717.7L286.7 719.3L286.4 721.9L285.8 723.5L284.6 725.3L286.5 726.3L288.5 728.0L289.8 730.3L290.3 732.9L289.9 736.3L288.4 739.8L290.9 739.7L294.2 740.7L296.2 742.2L298.1 745.1L298.7 747.5L298.8 756.3L303.1 751.2L305.1 749.7L308.4 748.8L310.0 748.8L312.5 749.4L334.3 763.3L337.5 765.1L339.6 767.8L340.3 769.4ZM346.0 497.5L345.5 498.7L346.6 499.3L346.2 498.0ZM230.8 374.5L231.3 403.7L230.7 407.0L229.4 409.2L228.2 410.5L225.2 412.1L222.7 412.6L210.5 412.9L216.1 423.7L216.8 427.0L216.4 429.5L215.3 431.8L213.6 433.7L201.4 442.2L217.1 445.5L218.7 446.2L220.8 447.8L222.3 449.9L223.1 452.4L223.0 464.7L234.5 458.9L237.8 458.2L240.3 458.6L242.6 459.7L244.4 461.4L253.5 474.8L255.4 462.6L256.5 460.2L258.2 458.2L259.6 457.2L262.1 456.2L276.9 454.5L270.9 441.5L270.4 439.0L270.7 436.4L271.7 434.1L273.3 432.1L284.9 423.4L271.0 420.9L268.6 419.9L266.7 418.2L265.3 416.1L264.6 413.6L264.2 400.7L252.1 406.0L249.7 406.7L246.3 406.5L244.0 405.5L242.7 404.4L241.5 403.2L240.4 401.0ZM275.2 330.8L270.5 334.7L265.7 337.8L261.3 339.8L255.7 341.5L251.0 342.4L244.6 342.6L238.9 342.0L233.1 340.5L233.1 343.5L232.1 346.9L230.1 349.8L227.4 352.0L211.5 358.5L199.3 364.0L181.7 373.5L170.4 380.5L159.5 388.2L149.0 396.3L134.1 409.5L124.8 418.9L116.0 428.8L103.8 444.5L96.4 455.4L89.5 466.7L83.3 478.3L77.7 490.3L72.7 502.5L68.4 514.9L63.2 534.0L60.6 546.9L58.7 559.9L57.1 579.6L56.9 592.8L57.4 606.0L59.6 625.6L61.9 638.6L64.8 651.5L68.5 664.2L72.9 676.7L77.9 689.0L83.6 701.0L93.3 718.4L100.5 729.6L108.4 740.4L116.8 750.8L125.7 760.7L135.2 770.2L145.2 779.2L161.1 791.6L172.2 799.2L183.7 806.3L195.6 812.7L207.9 818.5L220.4 823.7L233.2 828.2L252.8 833.7L266.1 836.5L279.5 838.7L299.8 840.6L313.4 840.9L327.0 840.6L340.6 839.6L354.1 837.9L374.1 834.0L387.2 830.6L400.2 826.5L412.9 821.7L425.3 816.3L437.4 810.2L449.1 803.6L466.0 792.5L476.8 784.4L487.1 775.7L496.9 766.6L506.2 756.9L515.0 746.8L523.2 736.3L534.4 719.7L541.1 708.2L547.2 696.4L552.6 684.3L557.4 672.0L561.5 659.4L564.9 646.6L568.8 627.2L570.5 614.1L571.5 601.0L571.8 587.9L571.4 574.7L570.2 561.6L568.4 548.6L564.4 529.3L560.9 516.6L556.7 504.1L549.2 485.9L543.4 474.1L537.0 462.6L526.2 446.0L518.3 435.4L509.8 425.2L500.9 415.5L491.4 406.3L481.4 397.5L471.0 389.3L454.6 378.0L443.2 371.1L431.5 364.9L413.3 356.7L400.8 352.0L388.1 347.9L375.2 344.5L362.1 341.8L348.9 339.7L335.6 338.3L315.6 337.4L302.2 337.7L286.5 338.9L284.1 338.7L281.9 338.0L278.9 336.3L276.5 333.7ZM193.5 665.1L192.5 663.2L191.9 660.9L191.8 655.7L193.0 650.2L195.3 645.9L198.1 643.0L201.7 640.6L205.3 639.1L212.6 637.1L214.8 636.2L217.1 634.4L220.2 631.3L216.8 615.8L215.4 611.5L213.8 608.0L212.1 605.4L209.6 603.0L207.0 601.6L203.6 600.6L200.0 600.6L196.2 601.7L192.5 603.7L189.9 605.9L186.6 609.7L183.2 614.5L179.3 620.9L173.7 631.0L172.2 632.6L170.4 634.0L170.7 636.3L170.2 639.7L160.9 667.3L154.5 684.6L153.0 689.9L152.2 695.1L153.9 696.5L155.3 698.3L158.2 703.8L160.5 710.6L161.9 717.3L162.4 723.8L162.4 730.1L161.1 749.8L160.8 759.2L159.8 762.5L158.6 764.5L157.0 766.2L155.1 767.6L153.0 768.5L149.7 769.2L146.2 768.8L144.1 768.0L140.6 765.5L131.1 756.1L122.4 746.4L114.2 736.3L106.6 725.8L99.5 714.9L93.0 703.6L87.2 692.1L82.1 680.5L77.5 668.4L73.5 656.1L70.3 643.6L66.6 624.3L65.0 611.6L64.2 598.7L64.1 579.7L65.0 566.6L67.5 547.8L70.1 534.9L75.1 516.6L79.4 504.1L86.7 486.6L92.6 474.8L102.3 458.4L109.7 447.5L121.4 432.5L130.2 422.6L143.7 409.2L153.8 400.6L169.0 389.0L185.3 378.5L202.4 369.3L217.6 362.5L219.8 361.8L222.0 361.6L224.3 361.8L227.0 362.7L228.3 360.4L229.9 358.7L231.9 357.3L234.0 356.4L245.1 353.0L257.4 349.8L276.8 346.1L289.7 344.5L302.7 343.6L315.7 343.3L328.7 343.7L341.6 344.8L354.5 346.5L367.3 348.8L379.6 351.7L392.1 355.4L404.3 359.6L416.3 364.5L428.1 370.0L439.5 376.1L450.6 382.7L466.8 393.9L476.9 401.9L486.6 410.5L495.9 419.5L504.4 428.7L512.6 438.7L520.3 449.0L531.0 465.4L540.0 482.1L545.4 493.8L550.2 506.0L554.3 518.2L559.1 536.5L561.5 549.1L563.3 562.2L564.4 575.0L564.7 594.2L563.5 613.2L561.8 626.3L558.1 644.9L554.6 657.6L552.4 664.6L551.5 666.7L549.3 669.4L547.5 670.8L544.3 672.2L542.0 672.6L538.6 672.3L536.4 671.6L533.5 669.7L531.9 668.0L523.8 654.1L516.5 639.1L510.1 624.1L488.3 570.2L479.8 551.2L471.5 533.6L470.7 530.1L470.9 527.7L472.0 524.2L473.7 521.7L468.1 518.5L463.8 515.6L460.3 512.5L456.9 508.6L453.3 503.4L451.1 499.2L450.4 495.8L450.7 492.4L448.0 491.7L445.0 490.1L433.8 478.4L427.2 471.9L421.3 466.9L415.5 462.9L410.4 460.4L405.1 458.7L399.8 458.0L394.8 458.3L390.7 459.5L387.8 461.5L385.3 464.7L383.8 468.7L383.3 474.0L384.3 479.5L386.5 484.8L392.9 497.5L396.6 496.4L400.1 496.5L403.4 497.5L406.2 499.5L408.4 502.2L409.7 505.4L410.7 516.4L412.4 525.2L414.8 524.7L417.1 524.7L419.4 525.2L422.8 526.5L424.7 527.8L426.3 529.5L427.6 531.4L428.4 533.5L428.9 537.0L428.3 540.4L427.4 542.5L425.3 545.3L422.5 547.3L406.2 555.6L409.0 557.2L410.6 558.8L411.9 560.6L412.9 562.7L417.0 577.9L426.3 607.0L430.2 620.4L433.6 613.7L436.4 609.2L439.3 605.5L443.1 601.9L445.1 600.7L448.4 599.6L451.9 599.6L455.3 600.7L457.3 601.9L459.7 604.3L464.8 613.6L467.2 619.2L469.8 626.2L473.3 639.2L475.3 651.2L475.6 661.1L474.2 671.2L471.0 682.9L467.5 692.6L463.1 703.2L458.1 713.5L452.6 723.6L451.3 725.4L448.7 727.7L446.6 728.7L443.8 729.4L457.2 767.9L457.8 770.1L457.8 773.6L456.7 776.8L454.8 779.7L452.2 781.9L449.0 783.2L423.0 789.8L402.0 795.5L398.5 795.9L394.4 794.9L393.3 796.7L391.8 798.4L389.9 799.8L387.5 801.0L336.4 813.3L333.0 813.6L329.6 812.9L326.6 811.3L324.3 809.0L322.2 812.5L320.7 814.2L317.9 816.2L315.8 817.1L295.7 820.8L292.2 820.6L290.0 819.9L287.0 818.0L284.7 815.4L283.3 812.2L282.4 805.7L281.9 803.8L280.4 801.3L277.7 798.9L274.6 797.0L270.6 795.1L248.2 786.3L235.5 780.5L230.9 777.7L226.8 774.6L223.5 771.3L220.9 767.9L218.3 762.7L217.0 758.2L216.5 752.3L216.7 749.7L217.3 747.4L218.9 744.4L221.3 742.0L223.2 740.8L230.6 738.0L229.2 727.2L227.8 719.3L226.2 712.6L223.1 701.7L222.0 696.7L221.5 690.7L221.8 685.8L214.2 688.7L210.9 689.5L208.6 689.4L206.4 688.9L204.3 688.0L202.0 686.5L199.7 684.6L197.3 681.8L195.3 678.9L193.8 675.8L192.8 672.7L192.5 670.3L192.6 668.0ZM355.6 756.5L362.9 737.0L364.1 735.0L365.7 733.3L368.6 731.4L370.7 730.6L376.7 730.2L383.0 728.6L385.9 728.2L385.3 725.2L385.5 721.7L386.8 718.4L388.2 716.3L385.1 713.1L383.8 711.2L382.9 709.1L382.5 706.9L382.5 704.6L383.0 702.0L380.8 700.4L379.2 698.7L377.6 695.6L377.0 693.3L372.2 693.1L370.2 692.6L364.4 697.9L361.5 699.9L358.2 700.9L355.9 701.0L353.6 700.6L351.4 699.8L349.4 698.6L346.9 696.0L343.1 695.4L339.9 693.8L337.4 691.3L334.4 686.6L330.8 682.4L328.2 681.6L325.1 682.5L314.1 693.5L312.3 695.0L309.1 696.4L306.8 696.8L303.3 696.6L300.5 695.6L297.5 698.7L295.8 699.9L294.8 701.6L293.2 703.3L290.3 705.1L287.6 706.0L286.7 708.9L285.6 710.7L288.1 713.8L289.4 717.0L289.7 720.4L288.8 724.2L291.5 727.1L293.0 730.3L293.4 733.8L292.9 737.0L296.6 738.6L299.1 741.0L300.9 743.9L301.6 746.1L301.8 748.3L303.7 747.1L306.9 745.9L310.3 745.8L313.6 746.6L335.6 760.6L338.5 762.0L341.2 764.6L343.2 761.8L346.1 759.6L348.3 758.7L350.6 758.3L354.5 758.5ZM234.1 392.6L234.2 404.8L233.8 407.0L233.0 409.2L231.8 411.1L230.2 412.8L228.3 414.1L226.2 415.0L222.8 415.6L215.5 415.8L219.3 423.7L219.8 427.0L219.3 430.4L218.4 432.5L216.4 435.2L208.9 440.7L218.0 442.7L221.2 444.2L223.0 445.7L224.4 447.5L225.9 450.7L226.3 453.1L226.1 459.7L234.4 455.7L237.8 455.2L241.2 455.7L243.3 456.6L246.0 458.6L251.7 466.6L252.5 461.9L253.3 459.6L255.3 456.7L257.1 455.2L259.2 454.0L261.4 453.3L272.4 452.0L268.1 442.5L267.5 440.3L267.5 436.8L268.6 433.5L270.5 430.7L277.5 425.2L269.1 423.5L266.1 421.8L264.4 420.2L263.1 418.3L261.8 415.1L261.3 405.3L253.3 408.8L250.1 409.7L247.8 409.8L245.5 409.4L243.4 408.6L241.5 407.4L239.1 405.0L237.9 403.0ZM190.2 665.3L189.3 662.9L188.7 660.1L188.9 654.7L190.2 649.0L192.9 644.1L195.7 641.1L199.5 638.4L204.3 636.2L212.6 633.9L214.4 632.7L216.9 630.3L214.2 617.7L211.5 610.2L210.1 607.8L208.3 605.8L206.3 604.6L203.7 603.7L200.5 603.6L197.3 604.5L194.3 606.2L191.4 608.7L188.3 612.4L184.4 618.2L177.0 631.6L175.2 633.9L173.6 635.4L173.6 637.7L173.1 640.5L163.8 668.3L157.7 684.5L156.2 689.6L155.4 693.8L157.8 696.5L161.2 703.1L163.5 709.7L164.9 717.2L165.4 723.7L165.5 730.4L164.1 750.0L164.0 758.3L163.5 761.1L161.8 765.1L160.1 767.5L157.9 769.4L155.4 770.8L152.6 771.8L149.8 772.2L145.5 771.7L142.7 770.7L139.1 768.3L128.9 758.1L120.1 748.3L111.8 738.1L104.0 727.4L96.9 716.4L90.3 705.0L84.4 693.3L79.1 681.3L74.5 669.1L70.5 656.6L67.2 644.0L64.6 631.2L62.7 618.3L61.5 605.3L60.9 592.3L61.4 573.2L62.7 559.8L65.7 540.9L68.7 527.8L74.2 509.5L78.9 496.9L86.8 479.5L93.1 467.6L103.3 451.4L114.9 435.6L127.7 420.8L141.7 407.0L156.7 394.4L172.6 382.9L189.4 372.7L206.9 363.8L189.0 372.8L172.1 383.1L156.1 394.6L141.0 407.2L127.0 421.0L114.2 435.8L102.5 451.6L92.1 468.2L86.0 479.7L77.9 497.5L71.3 515.9L66.2 534.7L63.6 547.4L61.0 566.8L59.9 586.2L60.5 605.8L61.7 618.7L64.8 638.0L69.5 657.0L75.7 675.6L83.4 693.7L92.5 711.2L103.0 727.9L114.9 743.7L123.4 753.8L137.3 768.0L152.3 781.1L168.3 793.0L179.5 800.2L197.0 810.0L215.2 818.4L234.1 825.3L247.0 829.1L266.6 833.5L286.6 836.5L306.7 837.8L320.1 837.8L333.6 837.2L353.6 834.9L373.4 831.1L392.8 825.7L405.5 821.3L424.0 813.5L441.8 804.3L458.8 793.8L469.6 786.1L485.1 773.4L499.4 759.7L512.6 744.9L520.7 734.5L531.8 718.1L541.5 701.0L549.8 683.1L554.5 670.9L560.4 652.2L564.7 633.2L567.5 613.8L568.5 600.9L568.6 581.4L567.2 561.9L564.3 542.7L559.8 523.7L553.9 505.2L546.4 487.2L537.6 469.8L527.4 453.1L515.9 437.3L503.2 422.4L489.3 408.5L474.4 395.7L469.2 391.7L458.5 384.1L453.0 380.5L447.4 377.1L441.7 373.8L436.0 370.6L430.1 367.6L424.1 364.7L441.0 373.4L452.5 380.3L468.4 391.3L478.9 399.6L493.2 412.5L502.5 422.2L515.0 436.7L523.0 447.5L533.4 463.6L539.9 475.3L548.1 492.6L553.1 505.0L558.9 523.2L562.1 536.2L565.5 555.0L567.0 568.4L567.7 581.3L567.8 594.0L566.5 613.5L563.7 633.2L559.3 652.3L555.3 665.6L554.1 668.3L552.4 670.6L549.1 673.4L545.1 675.1L540.8 675.6L537.9 675.2L535.2 674.3L532.6 672.9L530.5 671.0L528.7 668.7L521.1 655.3L513.8 640.3L507.3 625.2L485.5 571.4L477.0 552.4L468.6 534.7L467.8 531.7L467.7 528.7L468.2 525.7L469.3 522.8L464.7 520.0L461.0 517.2L457.7 514.1L454.5 510.5L451.5 506.2L448.8 501.5L447.8 498.8L447.4 494.7L444.4 493.3L442.1 491.5L427.6 476.5L421.8 471.3L417.1 467.6L412.4 464.7L408.4 462.9L403.6 461.5L399.7 461.0L395.3 461.3L392.0 462.2L389.9 463.7L388.0 466.2L386.9 468.8L386.4 471.2L386.4 474.5L386.8 477.1L388.8 482.7L394.4 493.8L397.7 493.3L402.0 493.8L406.0 495.5L409.3 498.3L411.0 500.7L412.6 504.7L413.6 515.2L414.7 521.6L417.4 521.7L420.4 522.3L423.0 523.2L425.5 524.6L428.7 527.6L430.3 530.0L431.3 532.7L431.9 537.0L431.6 539.9L430.7 542.7L428.4 546.4L425.1 549.3L412.1 556.0L414.6 559.1L415.7 561.7L419.9 577.0L431.0 612.1L433.9 607.5L437.1 603.5L441.3 599.5L443.8 597.9L448.0 596.6L450.9 596.5L455.2 597.4L457.9 598.6L460.2 600.4L462.2 602.6L465.2 607.8L468.2 613.7L470.6 619.5L473.1 626.7L476.5 640.0L478.3 651.2L478.6 661.2L477.3 671.5L474.4 682.4L471.4 691.0L467.6 700.5L463.4 709.7L458.7 718.8L455.3 725.1L453.6 727.4L451.5 729.4L447.8 731.5L460.1 766.9L460.8 769.7L460.7 774.0L459.5 778.2L457.1 781.7L453.7 784.5L449.7 786.1L423.7 792.7L402.8 798.5L399.8 798.9L395.7 798.5L393.8 800.7L391.5 802.4L386.8 804.3L337.1 816.2L334.3 816.6L331.4 816.4L328.6 815.7L325.0 813.8L321.7 817.4L319.3 818.9L316.6 820.0L295.9 823.8L293.0 823.8L288.8 822.7L285.0 820.3L282.2 817.0L280.4 813.0L279.1 804.9L278.1 803.3L276.5 801.8L273.1 799.7L269.4 797.9L245.7 788.6L234.0 783.1L229.1 780.2L224.9 776.9L221.2 773.3L218.3 769.5L215.5 763.9L214.0 758.8L213.5 753.4L214.0 747.8L215.7 743.8L218.3 740.5L221.9 738.1L227.3 736.0L224.6 719.0L219.3 698.6L218.6 694.1L218.4 690.3L212.5 692.3L208.2 692.4L205.4 691.8L202.8 690.6L198.3 687.3L193.9 682.4L192.3 679.7L190.7 676.2L189.9 673.4L189.5 670.5L189.7 667.5ZM216.9 359.5L220.6 358.6L223.5 358.6L225.6 359.0L227.9 356.4L231.7 354.0L238.0 351.9L250.6 348.3L269.5 344.2L286.0 341.9L282.2 341.3L279.4 340.2L277.0 338.6L274.3 335.7L270.4 338.5L266.5 340.8L262.3 342.7L256.5 344.5L252.0 345.3L246.7 345.7L240.7 345.3L236.0 344.5L235.4 346.8L234.1 349.5L232.4 351.9L230.2 353.8L227.7 355.3ZM352.9 755.1L359.6 737.0L360.9 734.4L362.6 732.0L366.0 729.3L368.6 728.1L371.4 727.4L376.3 727.2L382.3 725.6L382.5 721.0L384.3 716.6L381.9 713.9L380.0 710.0L379.5 707.2L379.6 703.4L376.8 700.5L374.6 696.3L371.1 696.0L365.3 701.1L361.5 703.2L357.2 704.0L352.9 703.6L348.8 701.9L345.3 698.9L342.1 698.3L338.2 696.2L335.0 693.1L332.0 688.4L329.1 685.1L328.2 684.8L326.7 685.2L316.2 695.7L313.9 697.5L311.3 698.9L307.1 699.9L304.2 699.8L301.2 699.2L298.1 702.0L295.2 705.6L292.8 707.2L290.1 708.5L289.4 710.2L291.4 713.6L292.6 717.7L292.7 720.6L292.3 723.2L294.1 725.5L295.4 728.1L296.2 731.0L296.3 735.0L299.5 737.0L301.5 739.0L303.1 741.4L304.0 743.6L306.4 743.0L309.2 742.7L312.0 743.0L314.8 743.8L317.3 745.1L337.0 757.9L340.8 760.0L343.3 757.8L346.0 756.3L348.9 755.5ZM236.9 407.1L236.3 409.2L235.0 411.8L233.2 414.1L231.0 415.9L228.5 417.4L225.8 418.3L220.4 418.7L221.7 421.5L222.6 424.2L222.8 427.0L222.5 429.9L221.7 432.6L220.4 435.1L218.6 437.4L216.5 439.2L219.0 439.8L221.7 440.9L224.1 442.6L226.1 444.7L227.7 447.2L228.8 449.9L229.3 454.7L232.2 453.2L235.0 452.4L237.8 452.2L240.7 452.5L243.4 453.3L245.9 454.7L248.2 456.5L250.2 459.1L251.3 457.0L253.1 454.6L256.6 451.9L260.8 450.3L267.9 449.4L265.2 443.5L264.5 440.7L264.4 437.8L264.8 435.0L265.8 432.2L267.3 429.8L270.1 426.9L268.0 426.3L265.4 425.0L263.1 423.2L261.2 421.1L259.8 418.5L258.8 415.8L258.4 409.9L251.8 412.5L249.0 412.8L246.2 412.6L243.4 411.9L240.8 410.6L238.6 408.9Z" fill="none" stroke="#6e6218" stroke-opacity=".95" stroke-width="1.12" stroke-linejoin="round"/><path d="M351.5 509.3L352.3 510.4L353.1 511.6L354.0 512.7L354.9 513.7L355.8 514.8L356.7 515.9L357.7 516.9L358.7 517.9L359.6 518.9L360.6 519.9L361.6 520.9L362.6 521.9L363.7 522.9L364.7 523.8L365.8 524.7L366.9 525.6L368.0 526.4L369.1 527.2L370.3 528.0L371.5 528.7L372.8 529.3L374.0 530.0L375.3 530.5L376.6 531.1L378.0 531.6L379.3 532.0L380.7 532.4L382.0 532.8L383.4 533.2L384.8 533.5L386.2 533.8L387.6 534.0L389.0 534.2L390.4 534.4L391.8 534.5L393.2 534.6L394.6 534.7L396.0 534.7L397.4 534.7L398.8 534.6L400.2 534.6L401.6 534.4L403.0 534.2L404.4 534.0L405.7 533.7M336.9 500.0L335.6 499.9L334.2 499.9L332.8 499.9L331.5 500.0L330.1 500.1L328.8 500.3L327.5 500.6L326.2 501.0L324.9 501.4L323.7 501.9L322.5 502.5L321.4 503.1L320.3 503.8L319.3 504.6L318.3 505.5L317.4 506.5L316.6 507.5L315.8 508.6L315.1 509.7L314.4 510.9L313.9 512.1L313.4 513.4L312.9 514.7L312.6 516.0L312.3 517.3L312.1 518.7L311.9 520.0L311.9 521.3L311.9 522.7L312.0 524.0L312.1 525.3L312.4 526.6L312.7 527.9L313.2 529.2L313.7 530.4L314.2 531.6L314.9 532.8L315.6 533.9L316.5 535.0L317.4 536.0L318.3 537.0L319.4 537.9L320.5 538.8L321.6 539.5L322.8 540.1L324.0 540.6L325.3 541.0L326.6 541.3L327.9 541.4L329.2 541.4L330.5 541.3L331.8 541.0L333.1 540.6L334.4 540.1L335.6 539.4L336.7 538.7L337.8 537.8L338.8 536.8L339.7 535.8L340.4 534.6L341.1 533.4L341.6 532.1L341.9 530.9L342.1 529.6L342.1 528.3L341.9 527.0L341.5 525.8L340.9 524.7L340.0 523.7M354.0 515.5L357.5 522.0L366.5 540.1L372.0 553.0" fill="none" stroke="#6e6218" stroke-opacity=".9" stroke-width=".9"/><path d="M236.0 409.1L233.9 412.8L231.9 414.8L229.6 416.4L225.7 418.0L219.9 418.4L221.5 421.6L222.3 424.3L222.5 427.0L222.2 429.8L221.4 432.5L220.1 435.0L218.4 437.1L215.7 439.3L218.9 440.1L221.5 441.2L223.9 442.8L225.9 444.9L227.4 447.3L228.5 450.0L229.0 452.9L229.0 455.2L232.3 453.5L235.0 452.7L237.8 452.5L240.6 452.8L243.3 453.6L245.8 454.9L247.9 456.7L250.3 459.7L251.6 457.2L253.3 454.8L256.8 452.2L260.9 450.6L268.3 449.7L265.1 442.0L264.7 439.2L264.8 436.4L265.5 433.7L266.8 431.1L268.4 428.9L270.8 426.8L268.1 426.0L265.5 424.8L263.3 423.0L261.4 420.9L260.0 418.4L259.1 415.7L258.7 409.4L253.1 411.8L249.0 412.5L244.8 412.0L242.2 411.0L238.8 408.7L236.8 406.4ZM185.7 660.3L185.8 654.3L186.8 649.6L188.8 644.8L191.8 640.6L195.6 637.3L199.1 635.2L203.4 633.4L211.3 631.2L213.6 629.4L211.2 618.5L209.4 612.9L207.1 608.9L205.7 607.7L204.2 607.0L201.7 606.5L198.5 607.3L195.6 609.0L193.1 611.4L188.3 617.8L184.0 624.9L179.5 633.2L176.7 636.7L176.5 639.6L175.6 642.9L166.6 669.3L160.2 686.5L158.6 692.7L160.3 694.8L161.9 697.5L165.2 705.1L167.2 712.7L168.3 720.0L168.4 731.8L167.2 750.2L166.8 760.2L165.9 763.6L164.4 766.7L161.0 770.7L156.7 773.6L153.4 774.7L150.0 775.2L159.4 782.8L170.0 790.5L186.8 801.0L204.3 810.2L222.6 818.0L241.4 824.4L260.7 829.3L280.3 832.7L300.1 834.5L320.1 834.8L340.0 833.6L359.7 830.8L379.1 826.5L398.2 820.7L416.7 813.5L434.5 804.9L451.6 794.9L467.8 783.6L483.1 771.2L497.2 757.6L510.3 742.9L522.1 727.4L532.6 710.9L541.7 693.8L549.1 676.9L544.2 678.4L540.7 678.6L535.5 677.7L532.4 676.3L529.5 674.2L527.1 671.7L519.8 659.5L514.6 649.2L508.8 636.6L483.7 575.0L475.4 556.1L465.8 535.7L464.7 530.4L464.9 526.7L465.5 524.1L458.5 519.0L455.5 516.2L452.2 512.4L448.9 507.8L446.0 502.8L444.8 499.5L444.4 496.8L440.0 493.8L430.3 483.4L423.1 476.4L416.8 471.1L411.0 467.4L405.2 465.0L399.6 464.1L395.8 464.3L392.8 465.2L391.0 467.0L389.8 469.6L389.3 473.1L389.7 476.4L390.9 479.8L393.3 485.1L396.1 490.4L401.0 490.5L404.4 491.4L409.0 493.9L411.6 496.3L413.6 499.1L415.6 504.0L417.2 518.6L419.5 518.9L424.2 520.4L428.6 523.2L431.1 525.7L433.0 528.6L434.7 533.6L434.9 537.1L434.5 540.6L433.5 543.9L431.8 547.0L429.5 549.6L426.8 551.8L416.8 557.0L418.6 560.8L422.8 576.1L432.0 605.0L435.5 600.7L439.5 597.0L442.5 595.2L445.8 594.0L449.3 593.5L452.8 593.6L457.9 595.2L460.9 597.0L463.5 599.4L465.6 602.3L468.8 608.1L472.1 615.2L474.5 621.4L476.9 628.8L480.1 642.6L481.6 654.0L481.5 663.2L480.2 672.5L477.3 683.3L471.0 700.2L463.5 716.4L456.9 728.1L454.6 730.7L451.5 733.0L463.0 765.9L463.8 769.3L463.7 774.5L462.9 777.8L461.4 781.0L458.1 785.0L455.3 787.1L450.5 789.1L424.5 795.7L403.5 801.4L400.0 801.9L396.9 801.8L393.1 805.0L390.0 806.5L387.6 807.3L337.8 819.2L334.4 819.6L330.9 819.4L327.6 818.6L325.7 817.8L323.6 819.8L320.6 821.6L315.7 823.3L296.2 826.8L292.7 826.8L287.5 825.4L283.1 822.6L279.6 818.6L277.4 813.8L276.3 806.3L275.7 805.2L274.6 804.2L269.1 801.1L243.2 790.8L231.3 785.1L226.3 781.9L222.2 778.6L218.8 775.2L215.7 771.1L212.7 765.0L211.1 759.4L210.5 753.5L211.1 747.1L213.0 742.3L216.3 738.3L219.0 736.2L224.0 734.0L221.6 719.6L216.9 702.1L215.6 694.6L213.1 695.3L209.6 695.5L204.5 694.7L201.3 693.3L199.1 691.9L196.3 689.6L193.7 687.0L189.9 681.8L187.4 675.7L186.4 670.6L187.0 665.5ZM359.3 731.3L363.0 727.7L367.6 725.2L371.0 724.4L375.8 724.1L379.2 723.3L379.6 720.3L380.6 717.2L378.5 714.1L377.2 710.9L376.5 707.5L376.4 704.6L374.4 702.3L372.5 699.2L372.1 699.1L367.1 703.5L362.5 706.0L357.4 707.0L352.1 706.5L347.3 704.5L343.9 701.8L339.5 700.5L336.4 698.7L332.6 695.0L329.5 690.2L327.9 688.3L318.3 697.8L315.6 700.0L312.5 701.7L309.1 702.6L305.6 702.9L302.2 702.6L300.4 704.1L297.2 707.8L293.2 710.4L294.2 712.3L295.3 715.6L295.7 719.1L295.5 722.3L298.2 727.0L299.2 730.4L299.4 733.3L302.7 735.8L305.7 740.0L310.9 739.7L314.3 740.4L317.4 741.7L338.3 755.2L340.5 756.1L344.8 753.5L348.3 752.5L350.8 752.2L356.8 735.9Z" fill="url(#hatch)" stroke="#6e6218" stroke-width=".6" fill-rule="evenodd"/></g>
<rect x="683" y="52" width="70.5" height="948" rx="4" fill="#222" fill-opacity=".62"/><rect x="699.2" y="66" width="9.6" height="920" fill="#f4f8fa"/><rect x="702.1" y="66" width="3.9" height="920" fill="#ea7f3f"/><rect x="715.2" y="64.8" width="5.8" height="1.1" fill="#e6e6e6"/><text x="722.6" y="67.9" class="tk">1.60</text><rect x="715.2" y="194.8" width="5.8" height="1.1" fill="#e6e6e6"/><text x="722.6" y="197.9" class="tk">1.40</text><rect x="715.2" y="324.8" width="5.8" height="1.1" fill="#e6e6e6"/><text x="722.6" y="327.9" class="tk">1.20</text><rect x="715.2" y="454.8" width="5.8" height="1.1" fill="#e6e6e6"/><text x="722.6" y="457.9" class="tk">1.00</text><rect x="715.2" y="584.8" width="5.8" height="1.1" fill="#e6e6e6"/><text x="722.6" y="587.9" class="tk">0.80</text><rect x="715.2" y="714.8" width="5.8" height="1.1" fill="#e6e6e6"/><text x="722.6" y="717.9" class="tk">0.60</text><rect x="715.2" y="844.8" width="5.8" height="1.1" fill="#e6e6e6"/><text x="722.6" y="847.9" class="tk">0.40</text><polygon points="703.9,56.5 712.2,61.1 712.2,70.5 703.9,75.1 695.6,70.5 695.6,61.1" fill="#ea7f3f" stroke="#fff" stroke-width="1.2" stroke-linejoin="round"/><path d="M698.6 66.2h10.6M703.9 60.9v10.6" stroke="#fff" stroke-width="1.3" fill="none"/><polygon points="703.9,976.9 712.2,981.6 712.2,990.9 703.9,995.5 695.6,990.9 695.6,981.6" fill="#ea7f3f" stroke="#fff" stroke-width="1.2" stroke-linejoin="round"/><path d="M655.3 32.2h27.4a2 2 0 0 1 2 2v24.5l7.4 7h-36.8a2 2 0 0 1 -2 -2v-29.5a2 2 0 0 1 2 -2z" fill="#676767"/><text x="658.6" y="45.5" class="tp">1.60</text><text x="658" y="60.3" class="tp">(8)</text><path d="M655.3 952.4h27.4a2 2 0 0 1 2 2v24.5l7.4 7h-36.8a2 2 0 0 1 -2 -2v-29.5a2 2 0 0 1 2 -2z" fill="#676767"/><text x="658.6" y="965.7" class="tp">0.20</text><text x="658" y="980.5" class="tp">(1)</text><g fill="none" stroke="#f0701e" stroke-width="1.9"><path d="M698.6 1025v-4.4a5.4 5.4 0 0 1 10.8 0v1.6"/></g><rect x="696.6" y="1025" width="14.8" height="10" rx="1.2" fill="#f0701e"/><path d="M701.6 1029.6h2.4l2.6 1.6-2.6 1.6h-2.4z" fill="#444"/><rect x="480.6" y="1030.8" width="40.5" height="2" fill="#6a6a6a"/>
</svg>
<div id="pn">
<div class="combo" style="left:5px;top:17px;width:393px;height:24px"><svg class="chev" width="12" height="7" viewBox="0 0 12 7"><path d="M0.8 0.9L6 5.7L11.2 0.9" fill="none" stroke="#444" stroke-width="1.5"/></svg></div>
<div class="combo" style="left:5px;top:60px;width:393px;height:24px"><svg class="chev" width="12" height="7" viewBox="0 0 12 7"><path d="M0.8 0.9L6 5.7L11.2 0.9" fill="none" stroke="#444" stroke-width="1.5"/></svg></div>
<div class="combo" style="left:5px;top:103px;width:393px;height:24px"><svg class="chev" width="12" height="7" viewBox="0 0 12 7"><path d="M0.8 0.9L6 5.7L11.2 0.9" fill="none" stroke="#444" stroke-width="1.5"/></svg></div>
<div class="combo" style="left:57px;top:153px;width:341px;height:24px"><svg class="chev" width="12" height="7" viewBox="0 0 12 7"><path d="M0.8 0.9L6 5.7L11.2 0.9" fill="none" stroke="#444" stroke-width="1.5"/></svg></div>
<div class="combo" style="left:43px;top:180px;width:80px;height:24px"><svg class="chev" width="12" height="7" viewBox="0 0 12 7"><path d="M0.8 0.9L6 5.7L11.2 0.9" fill="none" stroke="#444" stroke-width="1.5"/></svg></div>
<div class="combo" style="left:14px;top:607px;width:150px;height:24px"><svg class="chev" width="12" height="7" viewBox="0 0 12 7"><path d="M0.8 0.9L6 5.7L11.2 0.9" fill="none" stroke="#444" stroke-width="1.5"/></svg></div>
<svg class="ic" style="left:18px;top:21.5px" width="16" height="16" viewBox="0 0 16 16"><path d="M7.28 0.74L8.72 0.74L9.65 2.55L10.69 2.97L12.63 2.36L13.64 3.37L13.03 5.31L13.45 6.35L15.26 7.28L15.26 8.72L13.45 9.65L13.03 10.69L13.64 12.63L12.63 13.64L10.69 13.03L9.65 13.45L8.72 15.26L7.28 15.26L6.35 13.45L5.31 13.03L3.37 13.64L2.36 12.63L2.97 10.69L2.55 9.65L0.74 8.72L0.74 7.28L2.55 6.35L2.97 5.31L2.36 3.37L3.37 2.36L5.31 2.97L6.35 2.55Z" fill="#fff" stroke="#717171" stroke-width="1.45" stroke-linejoin="round"/><circle cx="8" cy="8" r="3.6" fill="none" stroke="#ed6b21" stroke-width="1.1" stroke-dasharray="1.6 0.7"/></svg>
<svg class="ic" style="left:41px;top:22px" width="12" height="14" viewBox="0 0 12 14"><path d="M2.1 8V3.8a2.5 2.5 0 0 1 2.5-2.5h2.8a2.5 2.5 0 0 1 2.5 2.5V8" fill="none" stroke="#7b7b7b" stroke-width="1.7"/><rect x="0.1" y="7.2" width="11.8" height="6.5" rx="0.9" fill="#7b7b7b"/><path d="M3.9 10.4a1.3 1.3 0 0 1 2.4-.6h0.6l1.6 .6-1.6 .6h-0.6a1.3 1.3 0 0 1-2.4-.6z" fill="#fff"/></svg>
<div class="sw" style="left:13px;top:64px"></div>
<svg class="ic" style="left:41px;top:65px" width="12" height="14" viewBox="0 0 12 14"><path d="M2.1 8V3.8a2.5 2.5 0 0 1 2.5-2.5h2.8a2.5 2.5 0 0 1 2.5 2.5V8" fill="none" stroke="#7b7b7b" stroke-width="1.7"/><rect x="0.1" y="7.2" width="11.8" height="6.5" rx="0.9" fill="#7b7b7b"/><path d="M3.9 10.4a1.3 1.3 0 0 1 2.4-.6h0.6l1.6 .6-1.6 .6h-0.6a1.3 1.3 0 0 1-2.4-.6z" fill="#fff"/></svg>
<svg class="ic" style="left:17px;top:107px" width="17" height="17" viewBox="0 0 17 17"><path d="M1.6 14.3V1.7H14.4V6.8M7 5.7H14.4M1.6 14.3H7" fill="none" stroke="#7b7b7b" stroke-width="1.2"/><rect x="3" y="3.8" width="4" height="4.4" fill="#ed6b21"/><circle cx="12" cy="11.8" r="4.05" fill="#55d400"/></svg>
<svg class="ic" style="left:41px;top:108px" width="12" height="14" viewBox="0 0 12 14"><path d="M2.1 8V3.8a2.5 2.5 0 0 1 2.5-2.5h2.8a2.5 2.5 0 0 1 2.5 2.5V8" fill="none" stroke="#7b7b7b" stroke-width="1.7"/><rect x="0.1" y="7.2" width="11.8" height="6.5" rx="0.9" fill="#7b7b7b"/><path d="M3.9 10.4a1.3 1.3 0 0 1 2.4-.6h0.6l1.6 .6-1.6 .6h-0.6a1.3 1.3 0 0 1-2.4-.6z" fill="#fff"/></svg>
<svg class="ic" style="left:402.29999999999995px;top:21px" width="16" height="16" viewBox="0 0 16 16"><path d="M7.28 0.74L8.72 0.74L9.65 2.55L10.69 2.97L12.63 2.36L13.64 3.37L13.03 5.31L13.45 6.35L15.26 7.28L15.26 8.72L13.45 9.65L13.03 10.69L13.64 12.63L12.63 13.64L10.69 13.03L9.65 13.45L8.72 15.26L7.28 15.26L6.35 13.45L5.31 13.03L3.37 13.64L2.36 12.63L2.97 10.69L2.55 9.65L0.74 8.72L0.74 7.28L2.55 6.35L2.97 5.31L2.36 3.37L3.37 2.36L5.31 2.97L6.35 2.55Z" fill="#fff" stroke="#717171" stroke-width="1.45" stroke-linejoin="round"/><circle cx="8" cy="8" r="3.6" fill="none" stroke="#ed6b21" stroke-width="1.1" stroke-dasharray="1.6 0.7"/></svg>
<svg class="ic" style="left:402.29999999999995px;top:64px" width="16" height="16" viewBox="0 0 16 16"><path d="M7.28 0.74L8.72 0.74L9.65 2.55L10.69 2.97L12.63 2.36L13.64 3.37L13.03 5.31L13.45 6.35L15.26 7.28L15.26 8.72L13.45 9.65L13.03 10.69L13.64 12.63L12.63 13.64L10.69 13.03L9.65 13.45L8.72 15.26L7.28 15.26L6.35 13.45L5.31 13.03L3.37 13.64L2.36 12.63L2.97 10.69L2.55 9.65L0.74 8.72L0.74 7.28L2.55 6.35L2.97 5.31L2.36 3.37L3.37 2.36L5.31 2.97L6.35 2.55Z" fill="#fff" stroke="#717171" stroke-width="1.45" stroke-linejoin="round"/><circle cx="8" cy="8" r="3.6" fill="none" stroke="#ed6b21" stroke-width="1.1" stroke-dasharray="1.6 0.7"/></svg>
<svg class="ic" style="left:402.29999999999995px;top:107px" width="16" height="16" viewBox="0 0 16 16"><path d="M7.28 0.74L8.72 0.74L9.65 2.55L10.69 2.97L12.63 2.36L13.64 3.37L13.03 5.31L13.45 6.35L15.26 7.28L15.26 8.72L13.45 9.65L13.03 10.69L13.64 12.63L12.63 13.64L10.69 13.03L9.65 13.45L8.72 15.26L7.28 15.26L6.35 13.45L5.31 13.03L3.37 13.64L2.36 12.63L2.97 10.69L2.55 9.65L0.74 8.72L0.74 7.28L2.55 6.35L2.97 5.31L2.36 3.37L3.37 2.36L5.31 2.97L6.35 2.55Z" fill="#fff" stroke="#717171" stroke-width="1.45" stroke-linejoin="round"/><circle cx="8" cy="8" r="3.6" fill="none" stroke="#ed6b21" stroke-width="1.1" stroke-dasharray="1.6 0.7"/></svg>
<div class="dot" style="left:8.1px;top:132.7px;background:#52d10a"></div>
<div class="dot" style="left:105.2px;top:132.7px;background:#f23c3c"></div>
<div class="dot" style="left:173.1px;top:132.7px;background:#3a97f2"></div>
<div class="cb" style="left:183px;top:184px"></div>
<div class="cb" style="left:19px;top:742px"></div>
<div class="list" style="left:5px;top:210px;width:420px;height:370px"><div class="hsep" style="left:200px"></div><div class="hsep" style="left:230px"></div><div class="row"></div></div>
<svg class="ic" style="left:214px;top:241px" width="14" height="11" viewBox="0 0 14 11"><path d="M0.7 5.5C2.3 2.6 4.5 1.2 7 1.2s4.7 1.4 6.3 4.3C11.7 8.4 9.5 9.8 7 9.8S2.3 8.4 0.7 5.5z" fill="none" stroke="#7a7a7a" stroke-width="1.2"/><circle cx="7" cy="5.5" r="2.1" fill="#7a7a7a"/></svg>
<svg class="ic" style="left:320px;top:240px" width="14" height="14" viewBox="0 0 14 14"><path d="M5.2 3.6H2.4a1.2 1.2 0 0 0-1.2 1.2v6.6a1.2 1.2 0 0 0 1.2 1.2h6a1.2 1.2 0 0 0 1.2-1.2V8.6" fill="none" stroke="#7a7a7a" stroke-width="1.1"/><circle cx="9.9" cy="3.7" r="2.3" fill="none" stroke="#ed6b21" stroke-width="1.7"/></svg>
<div class="grp" style="left:5px;top:594px;width:420px;height:174px"></div>
<div class="grp" style="left:5px;top:782px;width:420px;height:71px"></div>
<div class="grp" style="left:5px;top:866.5px;width:420px;height:157.5px"></div>
<div class="tb" style="left:13px;top:591px;width:136px"></div>
<div class="tb" style="left:12px;top:779px;width:28px"></div>
<div class="tb" style="left:12px;top:863.5px;width:124px"></div>
<div class="inp" style="left:167px;top:633px"></div>
<div class="inp" style="left:228px;top:633px"></div>
<div class="inp" style="left:289px;top:633px"></div>
<div class="inp" style="left:167px;top:659px"></div>
<div class="inp" style="left:228px;top:659px"></div>
<div class="inp" style="left:289px;top:659px"></div>
<div class="inp" style="left:167px;top:685px"></div>
<div class="inp" style="left:228px;top:685px"></div>
<div class="inp" style="left:289px;top:685px"></div>
<div class="inp" style="left:167px;top:711px"></div>
<div class="inp" style="left:228px;top:711px"></div>
<div class="inp" style="left:289px;top:711px"></div>
<svg class="ic" style="left:195px;top:612px;overflow:visible" width="14" height="12" viewBox="0 0 14 12"><path d="M5.2 1H3A2 2 0 0 0 1 3V9A2 2 0 0 0 3 11H5.2M8.8 1H11A2 2 0 0 1 13 3V9A2 2 0 0 1 11 11H8.8" fill="none" stroke="#000" stroke-width="2"/><rect x="6.2" y="3.8" width="1.6" height="4.3" fill="#7a7a7a"/><rect x="6.2" y="-0.8" width="1.6" height="1.8" fill="#a8a8a8"/><rect x="6.2" y="11" width="1.6" height="1.8" fill="#a8a8a8"/></svg>
<svg class="ic" style="left:256.29999999999995px;top:612px;overflow:visible" width="14" height="12" viewBox="0 0 14 12"><path d="M5.2 1H3A2 2 0 0 0 1 3V9A2 2 0 0 0 3 11H5.2M8.8 1H11A2 2 0 0 1 13 3V9A2 2 0 0 1 11 11H8.8" fill="none" stroke="#000" stroke-width="2"/><rect x="6.2" y="3.8" width="1.6" height="4.3" fill="#7a7a7a"/><rect x="6.2" y="-0.8" width="1.6" height="1.8" fill="#a8a8a8"/><rect x="6.2" y="11" width="1.6" height="1.8" fill="#a8a8a8"/></svg>
<svg class="ic" style="left:317.4000000000001px;top:612px;overflow:visible" width="14" height="12" viewBox="0 0 14 12"><path d="M5.2 1H3A2 2 0 0 0 1 3V9A2 2 0 0 0 3 11H5.2M8.8 1H11A2 2 0 0 1 13 3V9A2 2 0 0 1 11 11H8.8" fill="none" stroke="#000" stroke-width="2"/><rect x="6.2" y="3.8" width="1.6" height="4.3" fill="#7a7a7a"/><rect x="6.2" y="-0.8" width="1.6" height="1.8" fill="#a8a8a8"/><rect x="6.2" y="11" width="1.6" height="1.8" fill="#a8a8a8"/></svg>
<svg class="ic" style="left:16px;top:703.3px" width="12" height="14" viewBox="0 0 12 14"><path d="M2.1 8V3.8a2.5 2.5 0 0 1 2.5-2.5h2.8a2.5 2.5 0 0 1 2.5 2.5V8" fill="none" stroke="#7b7b7b" stroke-width="1.7"/><rect x="0.1" y="7.2" width="11.8" height="6.5" rx="0.9" fill="#7b7b7b"/><path d="M3.9 10.4a1.3 1.3 0 0 1 2.4-.6h0.6l1.6 .6-1.6 .6h-0.6a1.3 1.3 0 0 1-2.4-.6z" fill="#fff"/></svg>
<div class="btn" style="left:5px;top:1030.5px;width:206px"></div>
<div class="btn" style="left:216.70000000000005px;top:1030.5px;width:220px"></div>
<span class="t " id="t0" style="left:5.0px;top:-0.4px;letter-spacing:-0.211px;">Nastavení tisku:</span>
<span class="t " id="t1" style="left:5.0px;top:42.6px;letter-spacing:-0.084px;">Filament:</span>
<span class="t " id="t2" style="left:5.0px;top:85.6px;letter-spacing:-0.356px;">Tiskárna:</span>
<span class="t " id="t3" style="left:60.4px;top:21.1px;letter-spacing:-0.232px;">0.20mm BALANCED (upraveno)</span>
<span class="t " id="t4" style="left:60.4px;top:64.1px;letter-spacing:-0.273px;">Prusament PLA</span>
<span class="t " id="t5" style="left:60.4px;top:107.1px;letter-spacing:-0.511px;">Prusa CORE One HF0.4 nozzle</span>
<span class="t " id="t6" style="left:19.6px;top:128.4px;letter-spacing:0.033px;"><b>1</b> dostupných</span>
<span class="t " id="t7" style="left:116.5px;top:128.4px;letter-spacing:0.152px;"><b>0</b> offline</span>
<span class="t " id="t8" style="left:184.4px;top:128.4px;letter-spacing:0.003px;"><b>0</b> tisknoucích</span>
<span class="t " id="t9" style="left:7.5px;top:156.6px;letter-spacing:-0.279px;">Podpěry:</span>
<span class="t " id="t10" style="left:65.2px;top:156.6px;letter-spacing:-0.186px;">Žádné</span>
<span class="t " id="t11" style="left:7.5px;top:183.7px;letter-spacing:-0.143px;">Výplň:</span>
<span class="t " id="t12" style="left:51.4px;top:183.7px;letter-spacing:-0.644px;">15%</span>
<span class="t " id="t13" style="left:144.8px;top:183.7px;letter-spacing:-0.419px;">Límec:</span>
<span class="t " id="t14" style="left:12.4px;top:215.0px;letter-spacing:-0.523px;">Název</span>
<span class="t " id="t15" style="left:308.0px;top:215.0px;letter-spacing:-0.262px;">Editace</span>
<span class="t sel" id="t16" style="left:25.8px;top:237.8px;letter-spacing:-0.886px;">Těleso7</span>
<span class="t b" id="t17" style="left:17.0px;top:586.0px;letter-spacing:-0.170px;">Manipulace s objektem</span>
<span class="t " id="t18" style="left:22.0px;top:610.6px;letter-spacing:-0.173px;">Světové souřadnice</span>
<span class="t b" id="t19" style="left:181.2px;top:610.0px;">X</span>
<span class="t b" id="t20" style="left:243.2px;top:610.0px;">Y</span>
<span class="t b" id="t21" style="left:304.2px;top:610.0px;">Z</span>
<span class="t " id="t22" style="left:14.6px;top:636.4px;letter-spacing:-0.494px;">Pozice:</span>
<span class="t " id="t23" style="left:14.6px;top:662.4px;letter-spacing:-0.080px;">Otočení (relativní):</span>
<span class="t " id="t24" style="left:34.5px;top:688.4px;letter-spacing:-0.193px;">Měřítka:</span>
<span class="t " id="t25" style="left:34.5px;top:714.4px;letter-spacing:-0.238px;">Velikost [Svět]:</span>
<span class="t " id="t26" style="left:38.4px;top:742.0px;letter-spacing:-0.426px;">Palce</span>
<span class="t b" id="t27" style="left:14.6px;top:775.0px;letter-spacing:-0.025px;">Info</span>
<span class="t " id="t28" style="left:10.5px;top:791.6px;letter-spacing:-0.492px;">Rozměr:</span>
<span class="t " id="t29" style="left:69.5px;top:791.6px;letter-spacing:-0.512px;">75,00 x 85,86 x 1,60</span>
<span class="t " id="t30" style="left:184.8px;top:791.6px;letter-spacing:-0.081px;">Objem:</span>
<span class="t " id="t31" style="left:238.6px;top:791.6px;letter-spacing:-0.429px;">4119,47</span>
<span class="t " id="t32" style="left:10.5px;top:812.8px;letter-spacing:-0.466px;">Facety:</span>
<span class="t " id="t33" style="left:69.5px;top:812.8px;letter-spacing:-0.484px;">18554 (1 stěna)</span>
<span class="t " id="t34" style="left:12.4px;top:833.0px;letter-spacing:-0.128px;">Nebyly zjištěny žádné chyby</span>
<span class="t b" id="t35" style="left:14.2px;top:858.3px;letter-spacing:-0.225px;">Informace o slicování</span>
<span class="t " id="t36" style="left:10.7px;top:875.6px;letter-spacing:-0.031px;">Použito Filamentu (g)</span>
<span class="t " id="t37" style="left:28.1px;top:891.0px;letter-spacing:-0.101px;">(včetně cívky)</span>
<span class="t " id="t38" style="left:10.7px;top:912.0px;letter-spacing:-0.023px;">Použito Filamentu (m)</span>
<span class="t " id="t39" style="left:10.7px;top:933.0px;letter-spacing:0.027px;">Použito Filamentu (mm<span class="sup">3</span>)</span>
<span class="t " id="t40" style="left:10.7px;top:954.0px;letter-spacing:-0.208px;">Náklady</span>
<span class="t " id="t41" style="left:10.7px;top:974.8px;letter-spacing:-0.115px;">Odhadovaný čas tisku:</span>
<span class="t " id="t42" style="left:19.7px;top:989.8px;letter-spacing:0.020px;">- normální režim</span>
<span class="t " id="t43" style="left:19.7px;top:1004.8px;letter-spacing:0.025px;">- tichý režim</span>
<span class="t " id="t44" style="left:159.4px;top:875.6px;letter-spacing:-0.545px;">5,12 (198,12)</span>
<span class="t " id="t45" style="left:159.4px;top:912.0px;letter-spacing:-0.690px;">1,72</span>
<span class="t " id="t46" style="left:159.4px;top:933.0px;letter-spacing:-0.713px;">4125,15</span>
<span class="t " id="t47" style="left:159.4px;top:954.0px;letter-spacing:-0.690px;">0,14</span>
<span class="t " id="t48" style="left:159.4px;top:989.8px;letter-spacing:-0.315px;">13m</span>
<span class="t " id="t49" style="left:159.4px;top:1004.8px;letter-spacing:-0.315px;">16m</span>
<span class="t " id="t50" style="left:175.2px;top:636.5px;letter-spacing:-0.610px;">125</span>
<span class="t " id="t51" style="left:236.2px;top:636.5px;letter-spacing:-0.314px;">110</span>
<span class="t " id="t52" style="left:297.2px;top:636.5px;letter-spacing:-0.396px;">0,8</span>
<span class="t " id="t53" style="left:350.2px;top:636.5px;letter-spacing:0.900px;">mm</span>
<span class="t " id="t54" style="left:175.2px;top:662.5px;">0</span>
<span class="t " id="t55" style="left:236.2px;top:662.5px;">0</span>
<span class="t " id="t56" style="left:297.2px;top:662.5px;">0</span>
<span class="t " id="t57" style="left:350.2px;top:662.5px;">°</span>
<span class="t " id="t58" style="left:175.2px;top:688.5px;letter-spacing:-0.544px;">100</span>
<span class="t " id="t59" style="left:236.2px;top:688.5px;letter-spacing:-0.544px;">100</span>
<span class="t " id="t60" style="left:297.2px;top:688.5px;letter-spacing:-0.544px;">100</span>
<span class="t " id="t61" style="left:350.2px;top:688.5px;">%</span>
<span class="t " id="t62" style="left:175.2px;top:714.5px;letter-spacing:-0.580px;">75</span>
<span class="t " id="t63" style="left:236.2px;top:714.5px;letter-spacing:-0.666px;">85,86</span>
<span class="t " id="t64" style="left:297.2px;top:714.5px;letter-spacing:-0.396px;">1,6</span>
<span class="t " id="t65" style="left:350.2px;top:714.5px;letter-spacing:0.900px;">mm</span>
</div>
</body></html>
